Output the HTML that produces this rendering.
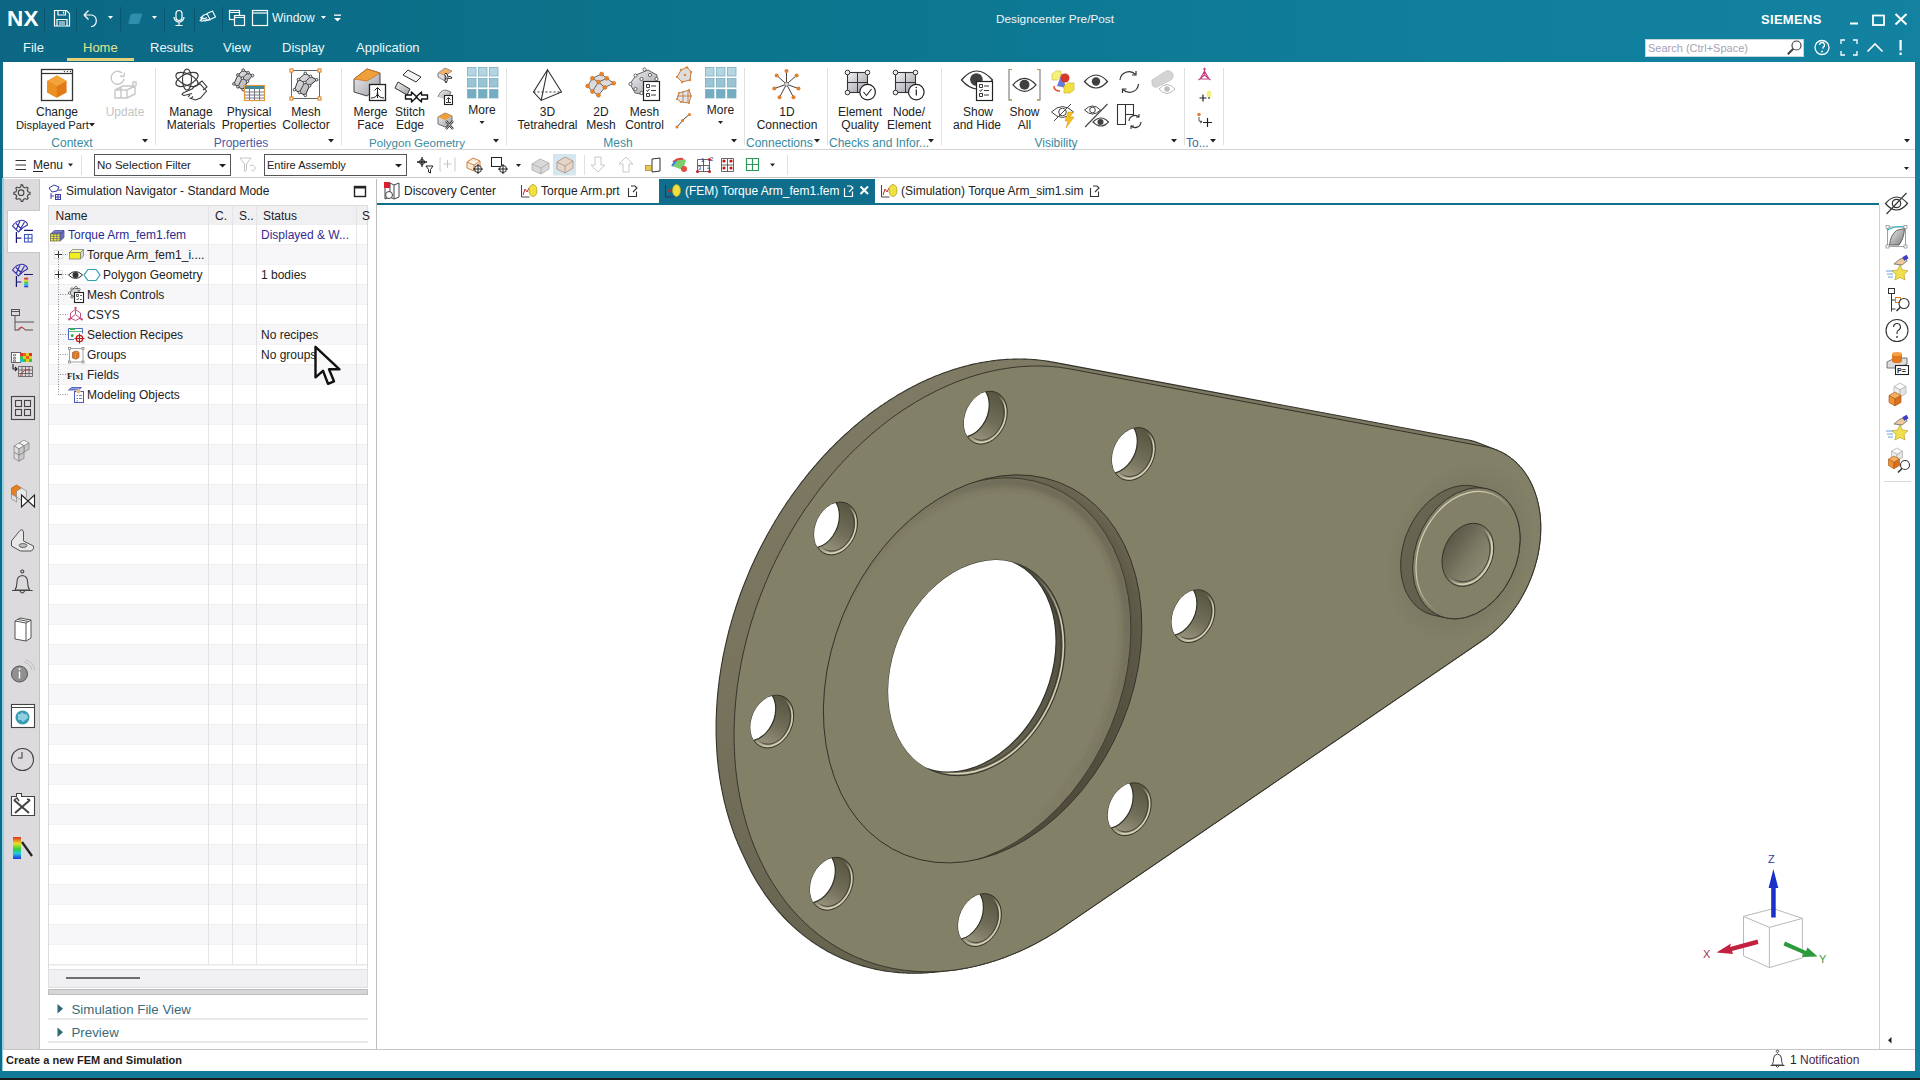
<!DOCTYPE html>
<html><head><meta charset="utf-8">
<style>
*{margin:0;padding:0;box-sizing:border-box}
html,body{width:1920px;height:1080px;overflow:hidden;background:#fff;font-family:"Liberation Sans",sans-serif;position:relative}
.a{position:absolute}
.t{position:absolute;white-space:nowrap;font-size:12px;line-height:14px;color:#222}
.c{text-align:center;transform:translateX(-50%)}
svg{overflow:visible}
</style></head><body>
<!-- title bar -->
<div class="a" style="left:0;top:0;width:1920px;height:62px;background:linear-gradient(90deg,#0c6784 0%,#0b728a 30%,#107f9d 78%,#1282a0 100%)"></div>
<!-- left/right/bottom frame -->
<div class="a" style="left:0;top:62px;width:3px;height:1018px;background:#0e6c8a"></div>
<div class="a" style="left:1915px;top:62px;width:5px;height:1018px;background:#1380a0"></div>
<div class="a" style="left:0;top:1071px;width:1920px;height:7px;background:#11799a"></div>
<div class="a" style="left:0;top:1078px;width:1920px;height:2px;background:#1a1a1a"></div>

<!-- NX logo -->
<div class="t" style="left:7px;top:5.5px;font-size:22.5px;line-height:26px;font-weight:700;color:#fff;letter-spacing:0.3px">NX</div>
<div class="a" style="left:44px;top:7px;width:1px;height:24px;background:#0a5670"></div>
<div class="a" style="left:76px;top:7px;width:1px;height:24px;background:#0a5670"></div>
<div class="a" style="left:120px;top:7px;width:1px;height:24px;background:#0a5670"></div>
<div class="a" style="left:164px;top:7px;width:1px;height:24px;background:#0a5670"></div>
<div class="a" style="left:194px;top:7px;width:1px;height:24px;background:#0a5670"></div>
<div class="a" style="left:222px;top:7px;width:1px;height:24px;background:#0a5670"></div>
<svg class="a" style="left:0;top:0" width="360" height="40">
 <g fill="none" stroke="#fff" stroke-width="1.2">
  <!-- save -->
  <path d="M54.5,10.5 h12 l3,3 v12.5 h-15 z"/>
  <path d="M58,10.5 v4.5 h7.5 v-4.5"/><path d="M63.5,11.5 v2"/>
  <path d="M57,26 v-6.5 h10 v6.5"/><path d="M59,22 h6 M59,24 h6"/>
  <!-- undo -->
  <path d="M84,15 l4.5,-4.5 M84,15 l4.5,4.5 M84,15 h8 a6,6 0 0 1 0,11.5 h-1"/>
  <!-- mic -->
  <rect x="176" y="10.5" width="6" height="10" rx="3"/>
  <path d="M174,17 a5,5 0 0 0 10,0 M179,22 v3 M175.5,25.5 h7"/>
  <!-- window icons -->
  <rect x="229.5" y="10.5" width="10" height="9"/><rect x="234.5" y="15.5" width="10" height="10" fill="#0f7190"/>
  <path d="M229.5,12.5 h10 M234.5,17.5 h10"/>
  <rect x="252.5" y="10.5" width="15" height="15"/><path d="M252.5,13 h15"/>
 </g>
 <!-- hand icon -->
 <g fill="none" stroke="#fff" stroke-width="1.1" stroke-linejoin="round"><path d="M207,13.5 l5.5,-2.5 l3,6 l-5.5,2.5 z"/><path d="M207,14 l-3,1 l-3.5,3 h3 l-3.5,2.5 l2,0.8 l4,-1.5 l4.5,0.2"/><path d="M203,19 l4,-1.2 M204.5,21.3 l4.5,-1.5"/></g>
 <!-- faded shaded icon -->
 <path d="M130.5,15 q1,-1.5 2.5,-1.5 h8 q1.5,0 1,1.5 l-2.5,7.5 q-0.5,1.5 -2,1.5 h-8 q-1.5,0 -1,-1.5 z" fill="#2e8eae"/>
 <g fill="#fff">
  <path d="M108,16 h5 l-2.5,3 z"/><path d="M152,16 h5 l-2.5,3 z"/><path d="M321,16 h5 l-2.5,3 z"/>
  <rect x="334" y="14.5" width="7" height="1.3"/><path d="M334,18 h7 l-3.5,3.5 z"/>
 </g>
</svg>
<div class="t" style="left:272px;top:11px;color:#f2f8fa">Window</div>
<!-- title -->
<div class="t" style="left:996px;top:11.5px;font-size:11.8px;color:#eef6f8">Designcenter Pre/Post</div>
<div class="t" style="left:1761px;top:13px;font-size:13px;font-weight:700;color:#fff;letter-spacing:0.3px">SIEMENS</div>
<svg class="a" style="left:1840px;top:0" width="80" height="62">
 <g fill="none" stroke="#fff" stroke-width="2">
  <path d="M10,23.5 h8"/>
  <rect x="33" y="15.5" width="11" height="9.5" stroke-width="1.8"/>
  <path d="M55.5,14 l11,10.5 M66.5,14 l-11,10.5"/>
 </g>
 <!-- help ? / fullscreen / chevron / ! -->
 <g fill="none" stroke="#fff" stroke-width="1.3">
  <circle cx="-18" cy="47.5" r="7"/>
  <path d="M-20.5,45 a2.5,2.5 0 1 1 3.5,2.3 v1.5"/>
  <path d="M1,44 v-4 h4 M13,40 h4 v4 M17,51 v4 h-4 M5,55 h-4 v-4"/>
  <path d="M27.5,51.5 l7.5,-7.5 l7.5,7.5" stroke-width="1.6"/>
 </g>
 <circle cx="-18" cy="51.5" r="0.9" fill="#fff"/>
 <rect x="59.5" y="40" width="2.2" height="10.5" fill="#fff"/><rect x="59.5" y="52.5" width="2.2" height="2.5" fill="#fff"/>
</svg>
<!-- menu tabs -->
<div class="t" style="left:23px;top:40px;font-size:13px;line-height:16px;color:#eaf6fa">File</div>
<div class="t" style="left:83px;top:40px;font-size:13px;line-height:16px;color:#e2e48a">Home</div>
<div class="a" style="left:67px;top:58px;width:67px;height:2.5px;background:#e6d27c"></div>
<div class="t" style="left:150px;top:40px;font-size:13px;line-height:16px;color:#eaf6fa">Results</div>
<div class="t" style="left:223px;top:40px;font-size:13px;line-height:16px;color:#eaf6fa">View</div>
<div class="t" style="left:282px;top:40px;font-size:13px;line-height:16px;color:#eaf6fa">Display</div>
<div class="t" style="left:356px;top:40px;font-size:13px;line-height:16px;color:#eaf6fa">Application</div>
<!-- search -->
<div class="a" style="left:1645px;top:39px;width:159px;height:18px;background:#fff;border:1px solid #c9d6dc"></div>
<div class="t" style="left:1648px;top:41px;font-size:11px;color:#a8a2b4">Search (Ctrl+Space)</div>
<svg class="a" style="left:1780px;top:36px" width="26" height="24"><g fill="none" stroke="#444" stroke-width="1.2"><circle cx="16.5" cy="9.5" r="4.5"/><path d="M13.3,12.7 l-5.5,5.5" stroke-width="2"/></g></svg>

<!-- ribbon -->
<div class="a" style="left:3px;top:62px;width:1912px;height:88px;background:#fff;border-bottom:1px solid #d4d4d4"></div>
<!-- ribbon labels -->
<div class="t c" style="left:57px;top:105px">Change</div>
<div class="t" style="left:16px;top:118px;font-size:11.2px">Displayed Part</div>
<div class="t c" style="left:125px;top:105px;color:#c4c4c4">Update</div>
<div class="t c" style="left:191px;top:105px">Manage</div>
<div class="t c" style="left:191px;top:118px">Materials</div>
<div class="t c" style="left:249px;top:105px">Physical</div>
<div class="t c" style="left:249px;top:118px">Properties</div>
<div class="t c" style="left:306px;top:105px">Mesh</div>
<div class="t c" style="left:306px;top:118px">Collector</div>
<div class="t c" style="left:370.5px;top:105px">Merge</div>
<div class="t c" style="left:370.5px;top:118px">Face</div>
<div class="t c" style="left:410px;top:105px">Stitch</div>
<div class="t c" style="left:410px;top:118px">Edge</div>
<div class="t c" style="left:482px;top:103px">More</div>
<div class="t c" style="left:547.5px;top:105px">3D</div>
<div class="t c" style="left:547.5px;top:118px">Tetrahedral</div>
<div class="t c" style="left:601px;top:105px">2D</div>
<div class="t c" style="left:601px;top:118px">Mesh</div>
<div class="t c" style="left:644.5px;top:105px">Mesh</div>
<div class="t c" style="left:644.5px;top:118px">Control</div>
<div class="t c" style="left:720.5px;top:103px">More</div>
<div class="t c" style="left:787px;top:105px">1D</div>
<div class="t c" style="left:787px;top:118px">Connection</div>
<div class="t c" style="left:860px;top:105px">Element</div>
<div class="t c" style="left:860px;top:118px">Quality</div>
<div class="t c" style="left:909px;top:105px">Node/</div>
<div class="t c" style="left:909px;top:118px">Element</div>
<div class="t c" style="left:978px;top:105px">Show</div>
<div class="t c" style="left:977px;top:118px">and Hide</div>
<div class="t c" style="left:1024.5px;top:105px">Show</div>
<div class="t c" style="left:1024.5px;top:118px">All</div>
<!-- group labels -->
<div class="t c" style="left:72px;top:136px;color:#3a8aa0">Context</div>
<div class="t c" style="left:241px;top:136px;color:#4a5ca8">Properties</div>
<div class="t c" style="left:417px;top:136px;color:#3a8aa0;font-size:11.6px">Polygon Geometry</div>
<div class="t c" style="left:618px;top:136px;color:#3a8aa0">Mesh</div>
<div class="t" style="left:746px;top:136px;color:#3a8aa0">Connections</div>
<div class="t" style="left:829px;top:136px;color:#3a8aa0">Checks and Infor...</div>
<div class="t c" style="left:1056px;top:136px;color:#3a8aa0">Visibility</div>
<div class="t" style="left:1186px;top:136px;color:#3a6aa8">To...</div>
<!-- separators -->
<div class="a" style="left:155px;top:68px;width:1px;height:77px;background:#e0e0e0"></div>
<div class="a" style="left:341px;top:68px;width:1px;height:77px;background:#e0e0e0"></div>
<div class="a" style="left:506px;top:68px;width:1px;height:77px;background:#e0e0e0"></div>
<div class="a" style="left:744px;top:68px;width:1px;height:77px;background:#e0e0e0"></div>
<div class="a" style="left:827px;top:68px;width:1px;height:77px;background:#e0e0e0"></div>
<div class="a" style="left:941px;top:68px;width:1px;height:77px;background:#e0e0e0"></div>
<div class="a" style="left:1184px;top:68px;width:1px;height:77px;background:#e0e0e0"></div>
<div class="a" style="left:1223px;top:68px;width:1px;height:77px;background:#e0e0e0"></div>
<!-- dropdown triangles -->
<svg class="a" style="left:0;top:0" width="1920" height="150"><g fill="#222">
 <path d="M89,123 h6 l-3,3.5 z"/>
 <path d="M142,139 h6 l-3,3.5 z"/><path d="M328,139 h6 l-3,3.5 z"/><path d="M493,139 h6 l-3,3.5 z"/>
 <path d="M479.5,121 h5 l-2.5,3 z"/><path d="M718,121 h5 l-2.5,3 z"/>
 <path d="M731,139 h6 l-3,3.5 z"/><path d="M814,139 h6 l-3,3.5 z"/><path d="M928,139 h6 l-3,3.5 z"/>
 <path d="M1171,139 h6 l-3,3.5 z"/><path d="M1210,139 h6 l-3,3.5 z"/><path d="M1904,139 h6 l-3,3.5 z"/>
</g></svg>
<svg class="a" style="left:0;top:0" width="1920" height="150">
<defs>
 <linearGradient id="gOr" x1="0" y1="0" x2="1" y2="1"><stop offset="0" stop-color="#f6a93a"/><stop offset="1" stop-color="#d86a12"/></linearGradient>
 <linearGradient id="gGr" x1="0" y1="0" x2="1" y2="1"><stop offset="0" stop-color="#f2f2f4"/><stop offset="1" stop-color="#9c9ca4"/></linearGradient>
</defs>
<!-- Change displayed part -->
<rect x="41.5" y="69.5" width="31" height="31" fill="#fff" stroke="#333" stroke-width="1.3"/>
<path d="M41.5,73.5 h31" stroke="#333" stroke-width="1.2"/>
<circle cx="64.4" cy="71.6" r="0.7" fill="#333"/><circle cx="67.4" cy="71.6" r="0.7" fill="#333"/><circle cx="70.4" cy="71.6" r="0.7" fill="#333"/>
<path d="M56.9,75.6 L66.6,80.9 L66.6,92.4 L56.9,97.75 L47.25,92.4 L47.25,80.9 Z" fill="#e07a18"/>
<path d="M56.9,75.6 L66.6,80.9 L56.9,86.2 L47.25,80.9 Z" fill="#f4a43a"/>
<path d="M47.25,80.9 L56.9,86.2 L56.9,97.75 L47.25,92.4 Z" fill="#ec901f"/>
<!-- Update (gray) -->
<g fill="none" stroke="#c8c8c8" stroke-width="1.4">
 <path d="M122,73 a6.5,6.5 0 1 0 2,6"/><path d="M120,76 l4,0.5 l0.5,-4" />
 <path d="M115,90 l8,-4 h12 l-8,4 z M115,90 v8 h12 v-8 M127,98 l8,-4 v-8 M121,86 v12"/>
 <path d="M133,86 v-4 h3 v4"/>
</g>
<!-- Manage materials -->
<g fill="none" stroke="#3a3a3a" stroke-width="1.1">
 <ellipse cx="187" cy="79.5" rx="12" ry="5.5" transform="rotate(25 187 79.5)"/>
 <ellipse cx="187" cy="79.5" rx="12" ry="5.5" transform="rotate(-25 187 79.5)"/>
 <ellipse cx="187" cy="79.5" rx="4.5" ry="10.5"/>
 <path d="M183,93 l9,-4 l3,-3 l5,-2 l6.5,7 l-6,7 l-5,2 l-6,-2 M183,93 l-1,1.5 l2,1 l8,-2 M190,95 l-2,1.8 M193,96.5 l-2,2"/>
 <path d="M198,84 l4,-3 l5,6 l-4,3"/>
</g>
<!-- Physical properties -->
<path d="M243.2,70.2 L248.1,72.8 L252.5,75.5 L247.6,81.3 L243.2,89.7 L237.9,86.8 L233.9,83.9 L237.9,75Z" fill="url(#gGr)" stroke="#333" stroke-width="1"/><path d="M237.9,75 L242.3,78.2 L247.6,81.3 M248.1,72.8 L242.3,78.2 L237.9,86.8" fill="none" stroke="#333" stroke-width="0.9"/><g fill="#f4f4f4" stroke="#333" stroke-width="0.9"><circle cx="243.2" cy="70.2" r="1.3"/><circle cx="248.1" cy="72.8" r="1.3"/><circle cx="252.5" cy="75.5" r="1.3"/><circle cx="237.9" cy="75" r="1.3"/><circle cx="242.3" cy="78.2" r="1.3"/><circle cx="247.6" cy="81.3" r="1.3"/><circle cx="233.9" cy="83.9" r="1.3"/><circle cx="237.9" cy="86.8" r="1.3"/><circle cx="243.2" cy="89.7" r="1.3"/></g>
<rect x="244.5" y="85.5" width="20" height="15" fill="#fff" stroke="#e0963c" stroke-width="1.2"/>
<rect x="245" y="86" width="19" height="3" fill="#3c8a9a"/>
<path d="M245,92 h19 M245,95 h19 M245,98 h19 M249.5,89 v11 M254.5,89 v11 M259.5,89 v11" stroke="#6a6a7a" stroke-width="0.9"/>
<!-- Mesh collector -->
<rect x="291.5" y="70.5" width="28" height="28" fill="none" stroke="#666" stroke-width="1"/>
<g fill="#fff" stroke="#e08a30" stroke-width="1.2"><rect x="290" y="69" width="3" height="3"/><rect x="318" y="69" width="3" height="3"/><rect x="290" y="97" width="3" height="3"/><rect x="318" y="97" width="3" height="3"/></g>
<path d="M305.3,73.3 L310.5,76.4 L316.7,79.8 L309.6,85.7 L305.3,95.4 L299.4,92.5 L294.5,89.7 L298.5,79.5Z" fill="url(#gGr)" stroke="#333" stroke-width="1"/><path d="M298.5,79.5 L304.7,82.6 L309.6,85.7 M310.5,76.4 L304.7,82.6 L299.4,92.5" fill="none" stroke="#333" stroke-width="0.9"/><g fill="#f4f4f4" stroke="#333" stroke-width="0.9"><circle cx="305.3" cy="73.3" r="1.3"/><circle cx="310.5" cy="76.4" r="1.3"/><circle cx="316.7" cy="79.8" r="1.3"/><circle cx="298.5" cy="79.5" r="1.3"/><circle cx="304.7" cy="82.6" r="1.3"/><circle cx="309.6" cy="85.7" r="1.3"/><circle cx="294.5" cy="89.7" r="1.3"/><circle cx="299.4" cy="92.5" r="1.3"/><circle cx="305.3" cy="95.4" r="1.3"/></g>
<!-- Merge face -->
<path d="M354,79 l13,-10 l13,4 v13 l-13,10 l-13,-4 z" fill="url(#gGr)" stroke="#444" stroke-width="1"/>
<path d="M354,79 l13,-10 l13,4 l-13,8 z" fill="#f0a03a" stroke="#c77020" stroke-width="0.8"/>
<rect x="369.5" y="84.5" width="16" height="16" fill="#fff" stroke="#222" stroke-width="1.3"/>
<path d="M377.5,98 v-10 M374.5,90.5 l3,-3 l3,3 M371,98 q6.5,0 6.5,-6 q0,6 6.5,6" fill="none" stroke="#222" stroke-width="1"/>
<!-- Stitch edge -->
<path d="M403,75 l5,-5 l13,7 l-5,5 z" fill="#f2f2f4" stroke="#333" stroke-width="1"/>
<path d="M395,88 l3,-6 l12,7 l-3,6 z" fill="url(#gGr)" stroke="#333" stroke-width="1"/>
<path d="M405.5,95 h6 v-3 l5.5,5 l-5.5,5 v-3 h-6 z M427.5,95 h-6 v-3 l-5.5,5 l5.5,5 v-3 h6 z" fill="#fff" stroke="#111" stroke-width="1.4" stroke-linejoin="round"/>
<!-- small poly icons -->
<path d="M438,73 l7,-5 l7,3 l-7,5 z" fill="#f2b06a" stroke="#888" stroke-width="0.8"/>
<path d="M438,73 v4 l7,4 v-5" fill="#ddd" stroke="#666" stroke-width="0.8"/>
<path d="M446,77 q-3,-3 0,-4 q2,2 2,4 q3,-2 4,1 q-3,1 -5,0 q1,3 -1,5 q-2,-2 0,-6" fill="#fff" stroke="#222" stroke-width="1"/>
<path d="M438,97 q2,-7 8,-7 l5,2 l-3,8" fill="url(#gGr)" stroke="#666" stroke-width="0.8"/>
<rect x="444.5" y="95.5" width="8" height="9" fill="#fff" stroke="#222" stroke-width="1.1"/>
<path d="M448.5,102 v-4 M446.5,99.5 l2,-2 l2,2 M446,102.5 h5" fill="none" stroke="#222" stroke-width="0.9"/>
<path d="M438,117 l7,-4 l7,3 v7 l-7,4 l-7,-3 z" fill="url(#gGr)" stroke="#555" stroke-width="0.8"/>
<path d="M438,117 l7,-4 l7,3 l-7,4 z" fill="#f0a03a"/>
<path d="M446,121 l7,8 M453,121 l-7,8" stroke="#222" stroke-width="2.2"/><path d="M446,121 l7,8 M453,121 l-7,8" stroke="#fff" stroke-width="0.8"/>
<!-- More grid 1 -->
<g stroke="#7aaec0" stroke-width="0.8">
 <rect x="467.5" y="67.5" width="8.5" height="8.5" fill="#b4d6e2"/><rect x="478.5" y="67.5" width="8.5" height="8.5" fill="#b4d6e2"/><rect x="489.5" y="67.5" width="8.5" height="8.5" fill="#b4d6e2"/>
 <rect x="467.5" y="78.5" width="8.5" height="8.5" fill="#98c4d4"/><rect x="478.5" y="78.5" width="8.5" height="8.5" fill="#98c4d4"/><rect x="489.5" y="78.5" width="8.5" height="8.5" fill="#98c4d4"/>
 <rect x="467.5" y="89.5" width="8.5" height="8.5" fill="#74acc2"/><rect x="478.5" y="89.5" width="8.5" height="8.5" fill="#74acc2"/><rect x="489.5" y="89.5" width="8.5" height="8.5" fill="#74acc2"/>
</g>
<!-- 3D tet -->
<g fill="none" stroke="#333" stroke-width="1.1">
 <path d="M547.5,69.7 L533.5,92 L541.2,100.4 L561.5,92 Z M547.5,69.7 L541.2,100.4"/>
 <path d="M533.5,92 H561.5" stroke-dasharray="2,2"/>
</g>
<!-- 2D mesh -->
<path d="M592.4,78.3 L601.6,74 L606.8,78.3 L613.7,83.2 L604.8,87.5 L598.5,95.2 L592.4,91.5 L587.6,86 Z" fill="#dcdce0" stroke="#555" stroke-width="0.9"/>
<path d="M592.4,78.3 L598.5,82.1 L604.8,87.5 M606.8,78.3 L598.5,82.1 L592.4,91.5" fill="none" stroke="#555" stroke-width="0.9"/>
<g fill="#e8832a" stroke="#c76a1a" stroke-width="0.5"><circle cx="601.6" cy="74" r="2"/><circle cx="592.4" cy="78.3" r="2"/><circle cx="606.8" cy="78.3" r="2"/><circle cx="598.5" cy="82.1" r="2"/><circle cx="613.7" cy="83.2" r="2"/><circle cx="587.6" cy="86" r="2"/><circle cx="604.8" cy="87.5" r="2"/><circle cx="592.4" cy="91.5" r="2"/><circle cx="598.5" cy="95.2" r="2"/></g>
<!-- Mesh control -->
<path d="M630,84 l6,-9 l12,-5 l9,5 v12 l-10,8 l-12,-2 z" fill="url(#gGr)" stroke="#555" stroke-width="0.9"/>
<g fill="#fff" stroke="#555" stroke-width="0.9"><circle cx="644.5" cy="69.5" r="1.6"/><circle cx="635.5" cy="75.5" r="1.6"/><circle cx="650" cy="75" r="1.6"/><circle cx="630.5" cy="84" r="1.6"/><circle cx="641.5" cy="79" r="1.6"/><circle cx="635.5" cy="89" r="1.6"/><circle cx="641.5" cy="93" r="1.6"/><circle cx="656.5" cy="79" r="1.6"/></g>
<rect x="643.5" y="81.5" width="16" height="19" fill="#fff" stroke="#222" stroke-width="1.2"/>
<path d="M646.5,84.5 h3 v3 h-3 z M646.5,93.5 h3 v3 h-3 z M651,86 h5 M651,90.5 h5 M651,95 h5 M646.5,90 l1,1.5 l2,-2.5" fill="none" stroke="#222" stroke-width="0.9"/>
<!-- small mesh icons -->
<path d="M677,77 l4,-7 l6,-3 l4,5 l-1,8 l-8,2 z" fill="#ddd" stroke="#b06020" stroke-width="0.8"/>
<g fill="#e8832a"><circle cx="681" cy="70" r="1.2"/><circle cx="687" cy="67.5" r="1.2"/><circle cx="691" cy="72" r="1.2"/><circle cx="690" cy="80" r="1.2"/><circle cx="682" cy="82" r="1.2"/><circle cx="677" cy="77" r="1.2"/><circle cx="685" cy="75" r="1.2"/></g>
<path d="M677,99 l2,-6 l10,-3 l2,6 l-2,7 l-8,-1 z" fill="#e4e4e8" stroke="#b06020" stroke-width="0.8"/>
<path d="M683,91 v11 M688,91 v11 M677,96 h14" stroke="#b06020" stroke-width="0.7"/>
<g fill="#e8832a"><circle cx="677" cy="99" r="1.1"/><circle cx="679" cy="93" r="1.1"/><circle cx="689" cy="90" r="1.1"/><circle cx="691" cy="96" r="1.1"/><circle cx="689" cy="103" r="1.1"/><circle cx="681" cy="102" r="1.1"/></g>
<path d="M677,127 l7,-8 l6,-5" fill="none" stroke="#444" stroke-width="1"/>
<g fill="#e8832a"><circle cx="677" cy="127" r="1.6"/><circle cx="682.5" cy="120.5" r="1.6"/><circle cx="689.5" cy="114.5" r="1.6"/></g>
<!-- More grid 2 -->
<g stroke="#7aaec0" stroke-width="0.8">
 <rect x="705.5" y="67.5" width="8.5" height="8.5" fill="#b4d6e2"/><rect x="716.5" y="67.5" width="8.5" height="8.5" fill="#b4d6e2"/><rect x="727.5" y="67.5" width="8.5" height="8.5" fill="#b4d6e2"/>
 <rect x="705.5" y="78.5" width="8.5" height="8.5" fill="#98c4d4"/><rect x="716.5" y="78.5" width="8.5" height="8.5" fill="#98c4d4"/><rect x="727.5" y="78.5" width="8.5" height="8.5" fill="#98c4d4"/>
 <rect x="705.5" y="89.5" width="8.5" height="8.5" fill="#74acc2"/><rect x="716.5" y="89.5" width="8.5" height="8.5" fill="#74acc2"/><rect x="727.5" y="89.5" width="8.5" height="8.5" fill="#74acc2"/>
</g>
<!-- 1D connection -->
<g stroke="#444" stroke-width="1"><path d="M786.5,84.2 L786.5,71 M786.5,84.2 L776.7,75.4 M786.5,84.2 L796.6,75.4 M786.5,84.2 L774.3,88.6 M786.5,84.2 L798.5,88.6 M786.5,84.2 L779.5,97.3 M786.5,84.2 L793.5,97.3"/></g>
<circle cx="786.5" cy="84.2" r="2" fill="#ddd" stroke="#666" stroke-width="0.7"/>
<g fill="#e0802a"><circle cx="786.5" cy="71" r="2"/><circle cx="776.7" cy="75.4" r="2"/><circle cx="796.6" cy="75.4" r="2"/><circle cx="774.3" cy="88.6" r="2"/><circle cx="798.5" cy="88.6" r="2"/><circle cx="779.5" cy="97.3" r="2"/><circle cx="793.5" cy="97.3" r="2"/></g>
<!-- Element quality -->
<rect x="847.5" y="72.5" width="20" height="20" fill="url(#gGr)" stroke="#333" stroke-width="1.1"/>
<path d="M857.5,72.5 v20 M847.5,82.5 h20" stroke="#333" stroke-width="1"/>
<g fill="#eee" stroke="#333" stroke-width="1"><circle cx="847.5" cy="72.5" r="2.3"/><circle cx="867.5" cy="72.5" r="2.3"/><circle cx="847.5" cy="92.5" r="2.3"/></g>
<circle cx="867.6" cy="92.1" r="7.8" fill="#fff" stroke="#222" stroke-width="1.2"/>
<path d="M863.5,92 l3,3.5 l5,-6.5" fill="none" stroke="#222" stroke-width="1.1"/>
<!-- Node/element -->
<rect x="895.5" y="72.5" width="20" height="20" fill="url(#gGr)" stroke="#333" stroke-width="1.1"/>
<path d="M905.5,72.5 v20 M895.5,82.5 h20" stroke="#333" stroke-width="1"/>
<g fill="#eee" stroke="#333" stroke-width="1"><circle cx="895.5" cy="72.5" r="2.3"/><circle cx="915.5" cy="72.5" r="2.3"/><circle cx="895.5" cy="92.5" r="2.3"/></g>
<circle cx="916.3" cy="92.1" r="7.8" fill="#fff" stroke="#222" stroke-width="1.2"/>
<path d="M916.3,89.5 v6" stroke="#222" stroke-width="1.2"/><circle cx="916.3" cy="87.5" r="0.8" fill="#222"/>
<!-- Show and hide -->
<path d="M961.5,80 q15,-18 31,0 q-15,18 -31,0 z" fill="none" stroke="#333" stroke-width="1.2"/>
<circle cx="976.4" cy="79.5" r="6.3" fill="#404040"/>
<rect x="976.5" y="81.5" width="16" height="19" fill="#fff" stroke="#222" stroke-width="1.2"/>
<path d="M979.5,84.5 h3 v3 h-3 z M979.5,93.5 h3 v3 h-3 z M984,86 h5 M984,90.5 h5 M984,95 h5 M979.5,90 l1,1.5 l2,-2.5" fill="none" stroke="#222" stroke-width="0.9"/>
<!-- Show all -->
<path d="M1012,69.5 h-3 v30.5 h3 M1037,69.5 h3 v30.5 h-3" fill="none" stroke="#777" stroke-width="1.1"/>
<path d="M1009,69.5 h3 M1009,100 h3 M1037,69.5 h3 M1037,100 h3" stroke="#c89440" stroke-width="1.1"/>
<path d="M1013,84.8 q11.5,-13 23,0 q-11.5,13 -23,0 z" fill="none" stroke="#333" stroke-width="1.2"/>
<circle cx="1024.5" cy="84.8" r="5" fill="#404040"/>
<!-- colorful -->
<path d="M1052,74 l4,-3 h5 v6 l-4,3 h-5 z" fill="#f4f07a" stroke="#c8c040" stroke-width="0.6"/>
<path d="M1062,73 l-5,13 l9,2 z" fill="#6a7ad8"/><circle cx="1065" cy="78" r="4.5" fill="#d83828"/>
<path d="M1064,86 l4,-3 h6 v7 l-4,3 h-6 z" fill="#f4e040" stroke="#c8b020" stroke-width="0.6"/>
<path d="M1054,86 q0,5 6,5" fill="none" stroke="#e0502a" stroke-width="1.5"/>
<!-- eye -->
<path d="M1084.5,81.5 q11.5,-13 23,0 q-11.5,13 -23,0 z" fill="none" stroke="#333" stroke-width="1.2"/>
<circle cx="1096" cy="81.5" r="4.2" fill="#404040"/>
<!-- refresh -->
<g fill="none" stroke="#333" stroke-width="1.2"><path d="M1120,80 a9,9 0 0 1 15.5,-5.5 M1138.5,84 a9,9 0 0 1 -15.5,5.5"/><path d="M1136,71 v4 h-4 M1122.5,93 v-4 h4"/></g>
<!-- faded flashlight -->
<path d="M1152,80 l14,-9 q5,-1 7,3 q1,4 -2,6 l-14,7 q-4,1 -5,-3 z" fill="#d4d4d4" stroke="#c4c4c4" stroke-width="0.8"/>
<path d="M1159,89 q8,-9 16,0 q-8,9 -16,0 z" fill="#fff" stroke="#bcbcbc" stroke-width="1"/><circle cx="1167" cy="89" r="2.8" fill="#bdbdbd"/>
<!-- eye slash lightning -->
<path d="M1051.5,112 q11,-11 22,0 q-11,11 -22,0 z" fill="none" stroke="#444" stroke-width="1"/>
<circle cx="1062.5" cy="112" r="3.8" fill="none" stroke="#444" stroke-width="1"/>
<path d="M1054,121 l17,-17" stroke="#444" stroke-width="1"/>
<path d="M1068,112 l5,0 l-3,5 l4,0 l-8,11 l2,-7 l-3,0 z" fill="#f4c020" stroke="#d09010" stroke-width="0.5"/>
<!-- eye slash + eye -->
<path d="M1084.5,110 q8,-8 16,0 q-8,8 -16,0 z" fill="none" stroke="#444" stroke-width="1"/>
<circle cx="1092.5" cy="110" r="2.8" fill="none" stroke="#444" stroke-width="1"/>
<path d="M1085,127 l22.5,-23" stroke="#444" stroke-width="1.1"/>
<path d="M1093,122 q8,-8 15.5,0 q-7.5,8 -15.5,0 z" fill="none" stroke="#444" stroke-width="1.1"/><circle cx="1100.5" cy="122" r="3" fill="#404040"/>
<!-- panels refresh -->
<path d="M1117.5,104.5 h16 v10 h-8 v10 h-8 z M1125.5,104.5 v10 M1125.5,114.5 h8" fill="none" stroke="#333" stroke-width="1.1"/>
<g fill="none" stroke="#333" stroke-width="1.1"><path d="M1129,121 a6,6 0 0 1 10,-4 M1141,122 a6,6 0 0 1 -10,4"/><path d="M1139,114 v3 h-3 M1131,129 v-3 h3"/></g>
<!-- To... icons -->
<g fill="none" stroke="#c04080" stroke-width="1.1"><path d="M1204.5,68 v7 M1204.5,75 l-6,5 M1204.5,75 l6,5 M1200,79 l4.5,-8 l4.5,8 z"/></g>
<path d="M1202.5,69.5 l2,-2 l2,2 z" fill="#c04080"/>
<path d="M1199.5,98 h7 M1203,94.5 v7" stroke="#222" stroke-width="1.2"/>
<ellipse cx="1209" cy="94" rx="2.5" ry="3.5" fill="#f4f080"/><rect x="1208" y="97" width="2" height="2" fill="#888"/>
<circle cx="1199" cy="114.5" r="1.8" fill="#e0803a"/>
<path d="M1199,117 v4 l3,1 M1201,120.5 l1,1.5 l-2,1" fill="none" stroke="#444" stroke-width="0.9"/>
<path d="M1203,122.5 h9 M1207.5,118 v9" stroke="#222" stroke-width="1.2"/>
</svg>


<!-- toolbar 2 -->
<div class="a" style="left:3px;top:151px;width:1912px;height:27px;background:#fff;border-bottom:1px solid #c8c8c8"></div>
<svg class="a" style="left:0;top:150px" width="1920" height="30">
 <g transform="translate(0,-150)">
 <path d="M15.5,160.5 h10.5 M15.5,165 h10.5 M15.5,169.5 h10.5" stroke="#333" stroke-width="1.1"/>
 <path d="M68,163.5 h5 l-2.5,3 z" fill="#222"/>
 <rect x="81" y="155" width="1" height="20" fill="#e0e0e0"/>
 <rect x="94.5" y="154.5" width="136" height="21" fill="#fff" stroke="#555" stroke-width="1"/>
 <path d="M219,164 h7 l-3.5,3.5 z" fill="#222"/>
 <!-- faded filter -->
 <path d="M240,158 h11 l-4.5,6 v6 l-2,1.5 v-7.5 z" fill="none" stroke="#c4c4c4" stroke-width="1"/>
 <path d="M250,166 a3,3 0 1 1 3,5 l-1.5,-1" fill="none" stroke="#c4c4c4" stroke-width="1"/>
 <rect x="264.5" y="154.5" width="142" height="21" fill="#fff" stroke="#555" stroke-width="1"/>
 <path d="M395,164 h7 l-3.5,3.5 z" fill="#222"/>
 <!-- icons -->
 <path d="M422,157 v10 M417,162 h10" stroke="#222" stroke-width="1.3"/><circle cx="422" cy="162" r="2.5" fill="none" stroke="#222" stroke-width="1"/>
 <path d="M426,166 h7 l-2.5,3.5 v3.5 l-2,-1 v-2.5 z" fill="#fff" stroke="#222" stroke-width="1"/>
 <path d="M441,158 h-1 v13 h1 M454,158 h1 v13 h-1" fill="none" stroke="#ccc" stroke-width="1"/><path d="M447.5,160 v8 M443.5,164 h8" stroke="#c4c4c4" stroke-width="1"/>
 <path d="M467,162 l6,-4 l7,3 v6 l-6,4 l-7,-3 z M467,162 l7,3 l6,-4 M474,165 v6" fill="#fbe8d0" stroke="#d08040" stroke-width="1"/>
 <circle cx="478" cy="169" r="3.5" fill="#fff" stroke="#222" stroke-width="1"/><path d="M478,164 v10 M473,169 h10" stroke="#222" stroke-width="1"/>
 <rect x="491.5" y="157.5" width="10" height="9" fill="#fff" stroke="#222" stroke-width="1"/>
 <circle cx="503" cy="169" r="3.5" fill="#fff" stroke="#222" stroke-width="1"/><path d="M503,164 v10 M498,169 h10" stroke="#222" stroke-width="1"/>
 <path d="M516,164 h5 l-2.5,3 z" fill="#222"/>
 <path d="M532,164 l8,-5 l9,4 v6 l-8,5 l-9,-4 z" fill="#d8d8d8" stroke="#aaa" stroke-width="0.8"/><path d="M532,164 l9,4 l8,-5 M541,168 v6" fill="none" stroke="#aaa" stroke-width="0.8"/>
 <rect x="553" y="154" width="23" height="21.5" fill="#d6e6ee"/>
 <path d="M557,162 l8,-5 l8,4 v7 l-8,5 l-8,-4 z" fill="#e6d6ca" stroke="#a89080" stroke-width="0.8"/><path d="M557,162 l8,4 l8,-5 M565,166 v7" fill="none" stroke="#a89080" stroke-width="0.8"/>
 <rect x="584" y="155" width="1" height="20" fill="#e0e0e0"/>
 <path d="M601,157 v8 h4 l-7,7 l-7,-7 h4 v-8 z" fill="#fff" stroke="#c8c8c8" stroke-width="1"/>
 <path d="M629,172 v-8 h4 l-7,-7 l-7,7 h4 v8 z" fill="#fff" stroke="#c8c8c8" stroke-width="1"/>
 <path d="M652,159 l8,-1 v13 l-8,1 z" fill="#fff" stroke="#333" stroke-width="1"/><rect x="645.5" y="165.5" width="6" height="5" fill="#e8c850" stroke="#a08020" stroke-width="0.7"/>
 <path d="M672,166 q6,-10 14,-6 l-3,10 z" fill="#7ad070"/><path d="M673,162 q5,-4 10,-3" stroke="#e04040" stroke-width="2" fill="none"/><path d="M672,166 q2,-3 4,-5" stroke="#4080e0" stroke-width="2" fill="none"/><circle cx="684" cy="169" r="3" fill="#e05040"/>
 <path d="M697.5,159.5 h12 v12 h-12 z M703.5,159.5 v12 M697.5,165.5 h12" fill="none" stroke="#555" stroke-width="0.9"/>
 <g fill="#c02020"><circle cx="697.5" cy="171.5" r="1.5"/><circle cx="709.5" cy="159.5" r="1.5"/><circle cx="709.5" cy="171.5" r="1.5"/></g>
 <g font-family="Liberation Sans" font-size="6" fill="#2040a0"><text x="701" y="162">1</text><text x="710" y="161">2</text><text x="698" y="170">3</text><text x="707" y="170">4</text></g>
 <path d="M721.5,158.5 h12 v13 h-12 z M727.5,158.5 v13 M721.5,165 h12" fill="none" stroke="#555" stroke-width="0.9"/>
 <g fill="#c01818"><circle cx="724" cy="161" r="1.6"/><circle cx="731" cy="161" r="1.6"/><circle cx="724" cy="168" r="1.6"/><circle cx="731" cy="168" r="1.6"/></g>
 <path d="M746.5,158.5 h12 v12 h-12 z M752.5,158.5 v12 M746.5,164.5 h12" fill="none" stroke="#2a9a5a" stroke-width="1.2"/>
 <path d="M770,163.5 h5 l-2.5,3 z" fill="#222"/>
 <rect x="787" y="155" width="1" height="20" fill="#e0e0e0"/>
 <path d="M1904,167 h5 l-2.5,3 z" fill="#222"/>
 </g>
</svg>
<div class="t" style="left:33px;top:158px;font-size:12px">Menu</div>
<div class="a" style="left:33px;top:171px;width:10px;height:1px;background:#222"></div>
<div class="t" style="left:97px;top:158px;font-size:11.5px">No Selection Filter</div>
<div class="t" style="left:267px;top:158px;font-size:11px">Entire Assembly</div>

<!-- left strip -->
<div class="a" style="left:3px;top:179px;width:37px;height:871px;background:#dcdadc;border-right:1px solid #c4c4c4"></div>
<div class="a" style="left:2px;top:178px;width:1.5px;height:893px;background:#8fd4e6"></div>
<div class="a" style="left:7px;top:210px;width:33px;height:43px;background:#fff;border:1px solid #c8c8c8;border-right:none"></div>
<svg class="a" style="left:0;top:0" width="48" height="1050">
 <!-- gear -->
 <g fill="none" stroke="#444" stroke-width="1.1">
  <path d="M21.1,184.9 l1.6,0.2 l0.6,2 l1.7,0.9 l1.9,-0.9 l1.2,1.1 l-0.9,1.9 l0.8,1.7 l2,0.6 l0.1,1.6 l-2,0.7 l-0.8,1.7 l0.9,1.9 l-1.2,1.1 l-1.9,-0.9 l-1.7,0.9 l-0.6,2 h-1.6 l-0.6,-2 l-1.7,-0.9 l-1.9,0.9 l-1.2,-1.1 l0.9,-1.9 l-0.8,-1.7 l-2,-0.7 v-1.6 l2,-0.6 l0.8,-1.7 l-0.9,-1.9 l1.2,-1.1 l1.9,0.9 l1.7,-0.9 l0.6,-2 z"/>
  <circle cx="21.1" cy="192.7" r="2.8"/>
 </g>
 <!-- sim nav icon -->
 <g fill="none" stroke="#3030b0" stroke-width="1.1">
  <path d="M12.5,226 q5,-7 11,-5.5 q4,1.5 4,4.5 q-5,2 -9,7 z M16,223.5 l6,6 M20,221 l-4,9 M24.5,222 l-5,8.5"/>
 </g>
 <path d="M16.4,232 v11 M16.4,238.2 h5 M24,230.4 h9" stroke="#181870" stroke-width="1.2"/>
 <rect x="24.5" y="234.5" width="7.5" height="7.5" fill="none" stroke="#3a58c0" stroke-width="1.1"/><path d="M28.2,234.5 v7.5 M24.5,238.2 h7.5" stroke="#3a58c0" stroke-width="1"/>
 <!-- results nav icon -->
 <g fill="none" stroke="#3030b0" stroke-width="1.1">
  <path d="M12.5,270 q5,-7 11,-5.5 q4,1.5 4,4.5 q-5,2 -9,7 z M16,267.5 l6,6 M20,265 l-4,9 M24.5,266 l-5,8.5"/>
 </g>
 <path d="M16.4,276 v11 M16.4,282 h5 M24,274.5 h9" stroke="#181870" stroke-width="1.2"/>
 <rect x="24.2" y="277.7" width="4" height="2" fill="#e03030"/><rect x="24.2" y="279.7" width="4" height="2" fill="#f0d020"/><rect x="24.2" y="281.7" width="4" height="2" fill="#30d040"/><rect x="24.2" y="283.7" width="4" height="2" fill="#20c0e0"/><rect x="24.2" y="285.7" width="4" height="1.6" fill="#2040e0"/>
 <!-- icon 4 -->
 <g fill="none" stroke="#555" stroke-width="1">
  <rect x="11.5" y="309.5" width="8" height="6"/><path d="M11.5,311.5 h8 M15,315.5 v15 M15,322 h19 M15,330 h4 q3,-5 6,0 h8" />
 </g>
 <path d="M18,330 q3,-6 7,0" stroke="#c04040" stroke-width="1" fill="none"/>
 <!-- icon 5 -->
 <rect x="11.5" y="352.5" width="9" height="10" fill="#fff" stroke="#555" stroke-width="0.9"/><path d="M13.5,354.5 h2 v1.5 h-2 z M13.5,357.5 h2 v1.5 h-2 z M13.5,360 h2 v1.5 h-2 z" fill="none" stroke="#444" stroke-width="0.6"/>
 <g><rect x="20" y="353" width="3" height="3" fill="#e03030"/><rect x="23" y="353" width="3" height="3" fill="#f06020"/><rect x="26" y="353" width="3" height="3" fill="#e0d020"/><rect x="29" y="353" width="3" height="3" fill="#e03030"/>
 <rect x="20" y="356" width="3" height="3" fill="#40c040"/><rect x="23" y="356" width="3" height="3" fill="#e0d020"/><rect x="26" y="356" width="3" height="3" fill="#f06020"/><rect x="29" y="356" width="3" height="3" fill="#e0d020"/>
 <rect x="20" y="359" width="3" height="3" fill="#20c0d0"/><rect x="23" y="359" width="3" height="3" fill="#40c040"/><rect x="26" y="359" width="3" height="3" fill="#e0d020"/><rect x="29" y="359" width="3" height="3" fill="#40c040"/></g>
 <path d="M13,364 v5 h4 M15,367 l2,2 l-2,2" fill="none" stroke="#222" stroke-width="1.1"/>
 <path d="M18.5,366.5 h14 v10 h-14 z M18.5,370 h14 M18.5,373.5 h14 M22,366.5 v10 M25.5,366.5 v10 M29,366.5 v10" fill="none" stroke="#555" stroke-width="0.8"/>
 <path d="M20,376 q4,-8 10,-6" stroke="#c03030" stroke-width="0.9" fill="none"/>
 <!-- icon 6 grid -->
 <g fill="none" stroke="#444" stroke-width="1.1"><rect x="11.5" y="396.5" width="23" height="23"/><rect x="15.5" y="400.5" width="6" height="6"/><rect x="24.5" y="400.5" width="6" height="6"/><rect x="15.5" y="409.5" width="6" height="6"/><rect x="24.5" y="409.5" width="6" height="6"/></g>
 <!-- cubes icon -->
<path d="M24,440.1 l5.0,2.9 l-5.0,2.9 l-5.0,-2.9 z" fill="#f2f2f2" stroke="#888" stroke-width="0.8"/><path d="M19.0,443.0 l5.0,2.9 v6.2 l-5.0,-2.9 z" fill="#dcdcdc" stroke="#888" stroke-width="0.8"/><path d="M29.0,443.0 l-5.0,2.9 v6.2 l5.0,-2.9 z" fill="#c8c8c8" stroke="#888" stroke-width="0.8"/><path d="M19,449.2 l5.0,2.9 l-5.0,2.9 l-5.0,-2.9 z" fill="#f2f2f2" stroke="#888" stroke-width="0.8"/><path d="M14.0,452.09999999999997 l5.0,2.9 v6.2 l-5.0,-2.9 z" fill="#dcdcdc" stroke="#888" stroke-width="0.8"/><path d="M24.0,452.09999999999997 l-5.0,2.9 v6.2 l5.0,-2.9 z" fill="#c8c8c8" stroke="#888" stroke-width="0.8"/><path d="M19,443 l5.0,2.9 l-5.0,2.9 l-5.0,-2.9 z" fill="#f2f2f2" stroke="#888" stroke-width="0.8"/><path d="M14.0,445.9 l5.0,2.9 v6.2 l-5.0,-2.9 z" fill="#dcdcdc" stroke="#888" stroke-width="0.8"/><path d="M24.0,445.9 l-5.0,2.9 v6.2 l5.0,-2.9 z" fill="#c8c8c8" stroke="#888" stroke-width="0.8"/>
 <!-- orange cube bowtie -->
 <path d="M11.5,488 l5,-3 l5,3 v6 l-5,3 l-5,-3 z" fill="#e88020" stroke="#a05010" stroke-width="0.6"/>
 <path d="M16.5,491 l5,-3 l5,3 v6 l-5,3 l-5,-3 z" fill="#e8e8e8" stroke="#777" stroke-width="0.6"/>
 <path d="M11.5,494 l5,3 v5 l-5,-3 z" fill="#ddd" stroke="#777" stroke-width="0.6"/>
 <path d="M21.5,495 l13,12 v-12 l-13,12 z" fill="#fff" stroke="#222" stroke-width="1.1"/>
 <!-- bracket -->
 <path d="M11.5,541 l8,-10 q3,-3 4,1 v9 l10,5 q1,3 -2,5 h-11 l-9,-5 z" fill="#e8e8e8" stroke="#555" stroke-width="1"/>
 <ellipse cx="23" cy="545.5" rx="4" ry="2" fill="#bbb" stroke="#555" stroke-width="0.8"/>
 <!-- bell -->
 <path d="M22.3,573 a1.5,1.5 0 1 1 0.01,0 M15,590 q2,-3 2,-8 q0,-6 5.3,-6.5 q5.3,0.5 5.3,6.5 q0,5 2,8 z M12,590.5 h20.6 M20,591 q2.3,4 4.6,0" fill="none" stroke="#444" stroke-width="1.1"/>
 <!-- books -->
 <path d="M15,621 l5,-3 l11,2 v18 l-5,3 l-11,-2 z M26,623 l5,-3 M26,623 v18 M15,621 l11,2 M18,619.5 l11,2" fill="#fff" stroke="#555" stroke-width="1"/>
 <!-- info -->
 <circle cx="19.5" cy="674" r="8" fill="#909090" stroke="#555" stroke-width="1"/>
 <path d="M19.5,671.5 v7" stroke="#fff" stroke-width="1.4"/><circle cx="19.5" cy="669" r="0.9" fill="#fff"/>
 <path d="M24,662 q6,1 8,8 M25,660 q8,1 10,10" fill="none" stroke="#bbb" stroke-width="0.9"/>
 <!-- globe window -->
 <rect x="11.5" y="704.5" width="23" height="23" fill="#fff" stroke="#444" stroke-width="1.1"/>
 <path d="M11.5,707.5 h23" stroke="#444" stroke-width="1"/>
 <circle cx="22.5" cy="717.5" r="7" fill="#3a9ab4"/><path d="M18,714 q3,1 4,-2 q2,3 5,2 l1,4 q-3,2 -5,4 q-2,-3 -5,-2 z" fill="#8fd0e0"/>
 <!-- clock -->
 <circle cx="22.5" cy="759.5" r="11" fill="none" stroke="#444" stroke-width="1.1"/>
 <path d="M22,752 v6 h-4" fill="none" stroke="#444" stroke-width="1.1"/>
 <!-- tools -->
 <path d="M11.5,796.5 h5 v-3 h5 v3 h13 v19 h-23 z" fill="#fff" stroke="#444" stroke-width="1.1"/>
 <path d="M14,800 l15,13 M30,800 l-15,13" stroke="#444" stroke-width="2"/><path d="M14,800 l3,-2 l2,3 M30,800 l-3,-1" stroke="#444" stroke-width="1.5" fill="none"/>
 <!-- rainbow pencil -->
 <defs><linearGradient id="gRain" x1="0" y1="0" x2="0" y2="1"><stop offset="0" stop-color="#e03020"/><stop offset="0.3" stop-color="#e8e020"/><stop offset="0.55" stop-color="#30d040"/><stop offset="0.75" stop-color="#20c8e0"/><stop offset="1" stop-color="#2030e0"/></linearGradient></defs>
 <rect x="13" y="837" width="8" height="22" fill="url(#gRain)"/>
 <path d="M22,842 l10,14" stroke="#222" stroke-width="2.2"/>
</svg>

<!-- navigator -->
<div class="a" style="left:40px;top:179px;width:337px;height:871px;background:#fff;border-right:1px solid #bdbdbd"></div>
<svg class="a" style="left:0;top:0" width="380" height="1050">
<rect x="48.5" y="205.5" width="319" height="19" fill="#f0eff1" stroke="#dcdcdc" stroke-width="1"/>
<rect x="49" y="224.5" width="318" height="20" fill="#ffffff"/>
<path d="M49,244.5 h318" stroke="#e6e5e8" stroke-width="1"/>
<rect x="49" y="244.5" width="318" height="20" fill="#f7f6f8"/>
<path d="M49,264.5 h318" stroke="#e6e5e8" stroke-width="1"/>
<rect x="49" y="264.5" width="318" height="20" fill="#ffffff"/>
<path d="M49,284.5 h318" stroke="#e6e5e8" stroke-width="1"/>
<rect x="49" y="284.5" width="318" height="20" fill="#f7f6f8"/>
<path d="M49,304.5 h318" stroke="#e6e5e8" stroke-width="1"/>
<rect x="49" y="304.5" width="318" height="20" fill="#ffffff"/>
<path d="M49,324.5 h318" stroke="#e6e5e8" stroke-width="1"/>
<rect x="49" y="324.5" width="318" height="20" fill="#f7f6f8"/>
<path d="M49,344.5 h318" stroke="#e6e5e8" stroke-width="1"/>
<rect x="49" y="344.5" width="318" height="20" fill="#ffffff"/>
<path d="M49,364.5 h318" stroke="#e6e5e8" stroke-width="1"/>
<rect x="49" y="364.5" width="318" height="20" fill="#f7f6f8"/>
<path d="M49,384.5 h318" stroke="#e6e5e8" stroke-width="1"/>
<rect x="49" y="384.5" width="318" height="20" fill="#ffffff"/>
<path d="M49,404.5 h318" stroke="#e6e5e8" stroke-width="1"/>
<rect x="49" y="404.5" width="318" height="20" fill="#f7f6f8"/>
<path d="M49,424.5 h318" stroke="#e6e5e8" stroke-width="1"/>
<rect x="49" y="424.5" width="318" height="20" fill="#ffffff"/>
<path d="M49,444.5 h318" stroke="#e6e5e8" stroke-width="1"/>
<rect x="49" y="444.5" width="318" height="20" fill="#f7f6f8"/>
<path d="M49,464.5 h318" stroke="#e6e5e8" stroke-width="1"/>
<rect x="49" y="464.5" width="318" height="20" fill="#ffffff"/>
<path d="M49,484.5 h318" stroke="#e6e5e8" stroke-width="1"/>
<rect x="49" y="484.5" width="318" height="20" fill="#f7f6f8"/>
<path d="M49,504.5 h318" stroke="#e6e5e8" stroke-width="1"/>
<rect x="49" y="504.5" width="318" height="20" fill="#ffffff"/>
<path d="M49,524.5 h318" stroke="#e6e5e8" stroke-width="1"/>
<rect x="49" y="524.5" width="318" height="20" fill="#f7f6f8"/>
<path d="M49,544.5 h318" stroke="#e6e5e8" stroke-width="1"/>
<rect x="49" y="544.5" width="318" height="20" fill="#ffffff"/>
<path d="M49,564.5 h318" stroke="#e6e5e8" stroke-width="1"/>
<rect x="49" y="564.5" width="318" height="20" fill="#f7f6f8"/>
<path d="M49,584.5 h318" stroke="#e6e5e8" stroke-width="1"/>
<rect x="49" y="584.5" width="318" height="20" fill="#ffffff"/>
<path d="M49,604.5 h318" stroke="#e6e5e8" stroke-width="1"/>
<rect x="49" y="604.5" width="318" height="20" fill="#f7f6f8"/>
<path d="M49,624.5 h318" stroke="#e6e5e8" stroke-width="1"/>
<rect x="49" y="624.5" width="318" height="20" fill="#ffffff"/>
<path d="M49,644.5 h318" stroke="#e6e5e8" stroke-width="1"/>
<rect x="49" y="644.5" width="318" height="20" fill="#f7f6f8"/>
<path d="M49,664.5 h318" stroke="#e6e5e8" stroke-width="1"/>
<rect x="49" y="664.5" width="318" height="20" fill="#ffffff"/>
<path d="M49,684.5 h318" stroke="#e6e5e8" stroke-width="1"/>
<rect x="49" y="684.5" width="318" height="20" fill="#f7f6f8"/>
<path d="M49,704.5 h318" stroke="#e6e5e8" stroke-width="1"/>
<rect x="49" y="704.5" width="318" height="20" fill="#ffffff"/>
<path d="M49,724.5 h318" stroke="#e6e5e8" stroke-width="1"/>
<rect x="49" y="724.5" width="318" height="20" fill="#f7f6f8"/>
<path d="M49,744.5 h318" stroke="#e6e5e8" stroke-width="1"/>
<rect x="49" y="744.5" width="318" height="20" fill="#ffffff"/>
<path d="M49,764.5 h318" stroke="#e6e5e8" stroke-width="1"/>
<rect x="49" y="764.5" width="318" height="20" fill="#f7f6f8"/>
<path d="M49,784.5 h318" stroke="#e6e5e8" stroke-width="1"/>
<rect x="49" y="784.5" width="318" height="20" fill="#ffffff"/>
<path d="M49,804.5 h318" stroke="#e6e5e8" stroke-width="1"/>
<rect x="49" y="804.5" width="318" height="20" fill="#f7f6f8"/>
<path d="M49,824.5 h318" stroke="#e6e5e8" stroke-width="1"/>
<rect x="49" y="824.5" width="318" height="20" fill="#ffffff"/>
<path d="M49,844.5 h318" stroke="#e6e5e8" stroke-width="1"/>
<rect x="49" y="844.5" width="318" height="20" fill="#f7f6f8"/>
<path d="M49,864.5 h318" stroke="#e6e5e8" stroke-width="1"/>
<rect x="49" y="864.5" width="318" height="20" fill="#ffffff"/>
<path d="M49,884.5 h318" stroke="#e6e5e8" stroke-width="1"/>
<rect x="49" y="884.5" width="318" height="20" fill="#f7f6f8"/>
<path d="M49,904.5 h318" stroke="#e6e5e8" stroke-width="1"/>
<rect x="49" y="904.5" width="318" height="20" fill="#ffffff"/>
<path d="M49,924.5 h318" stroke="#e6e5e8" stroke-width="1"/>
<rect x="49" y="924.5" width="318" height="20" fill="#f7f6f8"/>
<path d="M49,944.5 h318" stroke="#e6e5e8" stroke-width="1"/>
<rect x="49" y="944.5" width="318" height="20" fill="#ffffff"/>
<path d="M49,964.5 h318" stroke="#e6e5e8" stroke-width="1"/>
<rect x="49" y="964.5" width="318" height="0.5" fill="#f7f6f8"/>
<path d="M49,965.0 h318" stroke="#e6e5e8" stroke-width="1"/>
<path d="M208.5,205 V965" stroke="#e4e3e6" stroke-width="1"/>
<path d="M232.5,205 V965" stroke="#e4e3e6" stroke-width="1"/>
<path d="M256.5,205 V965" stroke="#e4e3e6" stroke-width="1"/>
<path d="M356.5,205 V965" stroke="#e4e3e6" stroke-width="1"/>
<path d="M48.5,205 V988 M367.5,205 V988" stroke="#dcdcdc" stroke-width="1"/>
<rect x="48.5" y="969.5" width="319" height="18" fill="#f0eff2" stroke="#e0e0e0" stroke-width="1"/>
<rect x="66" y="977" width="74" height="2" fill="#6e6e6e"/>
<rect x="48.5" y="989.5" width="319" height="5" fill="#d6d6d8" stroke="#bdbdbd" stroke-width="1"/>
<path d="M48,1019 h320 M48,1042 h320" stroke="#d4d4d6" stroke-width="1.2"/>
<path d="M57.5,1004 l5.5,4.7 l-5.5,4.7 z M57.5,1027.5 l5.5,4.7 l-5.5,4.7 z" fill="#2d6878"/>
<path d="M58.5,259 V395" stroke="#8a8a8a" stroke-width="1" stroke-dasharray="1,1.5"/>
<path d="M60,254.5 h8" stroke="#8a8a8a" stroke-width="1" stroke-dasharray="1,1.5"/>
<path d="M60,274.5 h8" stroke="#8a8a8a" stroke-width="1" stroke-dasharray="1,1.5"/>
<path d="M60,294.5 h8" stroke="#8a8a8a" stroke-width="1" stroke-dasharray="1,1.5"/>
<path d="M60,314.5 h8" stroke="#8a8a8a" stroke-width="1" stroke-dasharray="1,1.5"/>
<path d="M60,334.5 h8" stroke="#8a8a8a" stroke-width="1" stroke-dasharray="1,1.5"/>
<path d="M60,354.5 h8" stroke="#8a8a8a" stroke-width="1" stroke-dasharray="1,1.5"/>
<path d="M60,374.5 h8" stroke="#8a8a8a" stroke-width="1" stroke-dasharray="1,1.5"/>
<path d="M60,394.5 h8" stroke="#8a8a8a" stroke-width="1" stroke-dasharray="1,1.5"/>
<rect x="54.5" y="250.5" width="8" height="8" fill="#fff" stroke="#e0e0e0" stroke-width="1"/><path d="M55,254.5 h7 M58.5,251 v7" stroke="#333" stroke-width="1"/>
<rect x="54.5" y="270.5" width="8" height="8" fill="#fff" stroke="#e0e0e0" stroke-width="1"/><path d="M55,274.5 h7 M58.5,271 v7" stroke="#333" stroke-width="1"/>
<g fill="none" stroke="#3a3ab0" stroke-width="1"><path d="M49,188 l5,-3 l5,2 l-2,4 l-5,1 z"/><path d="M51,193 v6 M51,196 h3"/><rect x="55.5" y="194.5" width="5" height="5"/><path d="M58,194.5 v5 M55.5,197 h5"/><path d="M58,190 h4"/></g>
<rect x="354.5" y="186.5" width="11" height="10" fill="none" stroke="#222" stroke-width="1.4"/><path d="M354.5,187.5 h11" stroke="#222" stroke-width="2"/>
<path d="M50.5,234 l4,-3.5 h9.5 l-4,3.5 z" fill="#8a8ad8" stroke="#3a3aa0" stroke-width="0.7"/><path d="M60,234 l4,-3.5 v7 l-4,3.5 z" fill="#7a7ad0" stroke="#3a3aa0" stroke-width="0.7"/><rect x="50.5" y="234" width="9.5" height="7" fill="#f0f040" stroke="#5a5a30" stroke-width="0.7"/><path d="M53.7,234 v7 M56.8,234 v7 M50.5,236.3 h9.5 M50.5,238.6 h9.5 M53,232.3 h9.5 M62,232 v7" stroke="#4a4a8a" stroke-width="0.6" fill="none"/>
<path d="M69.5,252.5 l3,-3 h11 l-3,3 z" fill="#f6f6a0" stroke="#777" stroke-width="0.7"/><path d="M80.5,252.5 l3,-3 v6.5 l-3,3 z" fill="#d8d8d8" stroke="#777" stroke-width="0.7"/><rect x="69.5" y="252.5" width="11" height="6.5" fill="#f0f020" stroke="#777" stroke-width="0.7"/>
<path d="M68.5,275 q7,-7 14,0 q-7,7 -14,0 z" fill="#fff" stroke="#333" stroke-width="1"/><circle cx="75.5" cy="275" r="3" fill="#333"/>
<path d="M88,269.5 h8 l4,5.5 l-4,5.5 h-8 l-4,-5.5 z" fill="none" stroke="#2aa0b0" stroke-width="1.2"/>
<path d="M70,293 l2,-4 l4,-1.5 l3,2 v4 l-3,3 l-4,-0.5 z" fill="#d8d8d8" stroke="#444" stroke-width="0.8"/><g fill="#fff" stroke="#444" stroke-width="0.7"><circle cx="72" cy="289" r="1.2"/><circle cx="76" cy="287.5" r="1.2"/><circle cx="79" cy="289.5" r="1.2"/><circle cx="69.5" cy="293" r="1.2"/><circle cx="72" cy="297" r="1.2"/></g><rect x="74.5" y="292.5" width="9" height="10" fill="#fff" stroke="#222" stroke-width="1.1"/><path d="M76.5,294.5 h2 v2 h-2 z M80,295.5 h2 M76.5,299 l1,1 l1.5,-2 M80,299.5 h2" fill="none" stroke="#222" stroke-width="0.7"/>
<g fill="none" stroke="#c85080" stroke-width="1"><path d="M75.5,309 v5.5 M75.5,314.5 l-6,4.5 M75.5,314.5 l6,4.5 M70.5,313 l5,-3.5 l5,3.5 v5 l-5,2.5 l-5,-2.5 z"/></g><g fill="#c85080"><circle cx="75.5" cy="308" r="1.2"/><circle cx="69.3" cy="319.3" r="1.2"/><circle cx="81.7" cy="319.3" r="1.2"/></g>
<path d="M74,339.5 h-5.5 v-11 h14 v5" fill="#fff" stroke="#4a6ac0" stroke-width="1"/><rect x="70" y="328" width="5" height="2" fill="#3ab060"/><path d="M69,331.5 h13" stroke="#3ab060" stroke-width="0.8"/><circle cx="72.2" cy="335.7" r="1.4" fill="#2aa040"/><circle cx="79.5" cy="338.5" r="3.2" fill="none" stroke="#c01818" stroke-width="1.3"/><path d="M79.5,333.5 v10 M74.5,338.5 h10" stroke="#c01818" stroke-width="1.1"/>
<rect x="69.5" y="348.5" width="13.5" height="13.5" fill="#fff" stroke="#999" stroke-width="0.9"/><g fill="#fff" stroke="#888" stroke-width="0.8"><rect x="68.5" y="347.5" width="2" height="2"/><rect x="82" y="347.5" width="2" height="2"/><rect x="68.5" y="361" width="2" height="2"/><rect x="82" y="361" width="2" height="2"/></g><path d="M72.5,352.5 l3,-1.5 l3.5,1 v5.5 l-3,1.8 l-3.5,-1.2 z" fill="#d8782a" stroke="#a05018" stroke-width="0.6"/><path d="M75.5,353 l3.5,-1 M75.5,353 v5.8" stroke="#f0a050" stroke-width="0.6"/>
<text x="67" y="378.5" font-family="Liberation Serif" font-weight="700" font-size="9" fill="#222">F[x]</text>
<path d="M68.5,390 l3,-2.5 h10 l-3,2.5 z" fill="#8aa0e0" stroke="#3a4ab0" stroke-width="0.8"/><rect x="74.5" y="391.5" width="9" height="11" fill="#fff" stroke="#4a5ab0" stroke-width="1"/><circle cx="78.3" cy="391.2" r="2.3" fill="#e0c090"/><path d="M76.5,395.5 h1.5 M79,395.5 h3 M76.5,398.5 h1.5 M79,398.5 h3 M76.5,401 h1.5" stroke="#4a5ab0" stroke-width="0.8"/>

</svg>
<div class="t" style="left:66px;top:184px;color:#222;font-size:12px;line-height:14px">Simulation Navigator - Standard Mode</div>
<div class="t" style="left:55.5px;top:208.5px;color:#222;font-size:12px;line-height:14px">Name</div>
<div class="t" style="left:215px;top:208.5px;color:#222;font-size:12px;line-height:14px">C.</div>
<div class="t" style="left:239px;top:208.5px;color:#222;font-size:12px;line-height:14px">S..</div>
<div class="t" style="left:263px;top:208.5px;color:#222;font-size:12px;line-height:14px">Status</div>
<div class="t" style="left:362px;top:208.5px;color:#222;font-size:12px;line-height:14px">S</div>
<div class="t" style="left:68px;top:228px;color:#2a2a90;font-size:12px;line-height:14px">Torque Arm_fem1.fem</div>
<div class="t" style="left:261px;top:228px;color:#3a2a90;font-size:12px;line-height:14px">Displayed &amp; W...</div>
<div class="t" style="left:87px;top:248px;color:#222;font-size:12px;line-height:14px">Torque Arm_fem1_i....</div>
<div class="t" style="left:103px;top:268px;color:#222;font-size:12px;line-height:14px">Polygon Geometry</div>
<div class="t" style="left:261px;top:268px;color:#222;font-size:12px;line-height:14px">1 bodies</div>
<div class="t" style="left:87px;top:288px;color:#222;font-size:12px;line-height:14px">Mesh Controls</div>
<div class="t" style="left:87px;top:308px;color:#222;font-size:12px;line-height:14px">CSYS</div>
<div class="t" style="left:87px;top:328px;color:#222;font-size:12px;line-height:14px">Selection Recipes</div>
<div class="t" style="left:261px;top:328px;color:#222;font-size:12px;line-height:14px">No recipes</div>
<div class="t" style="left:87px;top:348px;color:#222;font-size:12px;line-height:14px">Groups</div>
<div class="t" style="left:261px;top:348px;color:#222;font-size:12px;line-height:14px">No groups</div>
<div class="t" style="left:87px;top:368px;color:#222;font-size:12px;line-height:14px">Fields</div>
<div class="t" style="left:87px;top:388px;color:#222;font-size:12px;line-height:14px">Modeling Objects</div>
<div class="t" style="left:71.5px;top:1001.5px;color:#3a6a7a;font-size:13.3px;line-height:16px">Simulation File View</div>
<div class="t" style="left:71.5px;top:1024.5px;color:#3a6a7a;font-size:13.3px;line-height:16px">Preview</div>
<svg class="a" style="left:0;top:0" width="380" height="400" overflow="visible"><path d="M315.5,346.8 L315.5,377.3 L323.0,370.8 L328.0,383.8 L334.0,381.3 L329.0,369.3 L339.5,369.3Z" fill="#f8f8f8" stroke="#111" stroke-width="2.4" stroke-linejoin="round"/></svg>

<!-- tabs -->
<div class="a" style="left:659px;top:179px;width:216px;height:24px;background:#0f6e8b"></div>
<div class="a" style="left:377px;top:203px;width:1503px;height:2px;background:#126f8c"></div>
<svg class="a" style="left:0;top:0" width="1920" height="210">
 <!-- discovery center icon -->
 <path d="M385,185 l5,-2 l4,2 l5,-2 v14 l-5,2 l-4,-2 l-5,2 z M390,183 v14 M394,185 v14" fill="#fff" stroke="#444" stroke-width="1"/>
 <rect x="384" y="182" width="6" height="6" fill="#d82030"/>
 <circle cx="389" cy="195" r="3.5" fill="#fff" stroke="#444" stroke-width="1"/>
 <!-- prt icon -->
 <g><path d="M521.5,185 v12 h8" fill="none" stroke="#444" stroke-width="1"/><path d="M523,195 l2,-6 l2,3 l2,-4" fill="none" stroke="#c03030" stroke-width="1"/><ellipse cx="533" cy="190.5" rx="4" ry="6" fill="#f0e040" stroke="#b0a020" stroke-width="0.8"/></g>
 <path d="M628.5,188 v8.5 h8 v-5 M631,186 h4 l2,2 l-4,4" fill="none" stroke="#333" stroke-width="1.1"/>
 <!-- fem icon -->
 <g><path d="M665.5,185 v12 h8" fill="none" stroke="#2a3060" stroke-width="1"/><path d="M667,195 l2,-6 l2,3 l2,-4" fill="none" stroke="#c03030" stroke-width="1"/><ellipse cx="676.5" cy="190.5" rx="4" ry="6" fill="#f0e040" stroke="#b0a020" stroke-width="0.8"/></g>
 <path d="M844.5,188 v8.5 h8 v-5 M847,186 h4 l2,2 l-4,4" fill="none" stroke="#fff" stroke-width="1.2"/>
 <path d="M860.5,186.5 l7.5,7.5 M868,186.5 l-7.5,7.5" stroke="#fff" stroke-width="2"/>
 <!-- sim icon -->
 <g><path d="M881.5,185 v12 h8" fill="none" stroke="#444" stroke-width="1"/><path d="M883,195 l2,-6 l2,3 l2,-4" fill="none" stroke="#c03030" stroke-width="1"/><ellipse cx="893" cy="190.5" rx="4" ry="6" fill="#f0e040" stroke="#b0a020" stroke-width="0.8"/></g>
 <path d="M1090.5,188 v8.5 h8 v-5 M1093,186 h4 l2,2 l-4,4" fill="none" stroke="#333" stroke-width="1.1"/>
</svg>
<div class="t" style="left:404px;top:184px">Discovery Center</div>
<div class="t" style="left:541px;top:184px">Torque Arm.prt</div>
<div class="t" style="left:685px;top:184px;color:#fff">(FEM) Torque Arm_fem1.fem</div>
<div class="t" style="left:901px;top:184px">(Simulation) Torque Arm_sim1.sim</div>

<!-- graphics -->
<div class="a" style="left:378px;top:205px;width:1500px;height:845px;background:#fff"></div>
<svg width="1920" height="1080" viewBox="0 0 1920 1080" style="position:absolute;left:0;top:0">
<defs>
<linearGradient id="gSide" x1="0" y1="0" x2="0" y2="1"><stop offset="0" stop-color="#7e7a63"/><stop offset="0.55" stop-color="#77735d"/><stop offset="1" stop-color="#65624e"/></linearGradient>
<linearGradient id="gHole" x1="0.92" y1="0.78" x2="0.08" y2="0.22"><stop offset="0" stop-color="#57553f"/><stop offset="0.5" stop-color="#6f6c57"/><stop offset="1" stop-color="#9c9880"/></linearGradient>
<linearGradient id="gHoleC" x1="0.92" y1="0.78" x2="0.08" y2="0.22"><stop offset="0" stop-color="#4a483a"/><stop offset="1" stop-color="#6d6a56"/></linearGradient>
<linearGradient id="gWall" x1="0" y1="0" x2="1" y2="0"><stop offset="0" stop-color="#4e4b3c"/><stop offset="1" stop-color="#6e6a55"/></linearGradient>
<linearGradient id="gBossWall" x1="0" y1="0" x2="1" y2="1"><stop offset="0" stop-color="#6a6753"/><stop offset="1" stop-color="#5c5947"/></linearGradient>
<linearGradient id="gBossHole" x1="0.86" y1="0.15" x2="0.14" y2="0.85"><stop offset="0" stop-color="#5a5848"/><stop offset="0.6" stop-color="#7f7c66"/><stop offset="1" stop-color="#8e8b74"/></linearGradient>
<linearGradient id="gRim" x1="0.86" y1="0.15" x2="0.14" y2="0.85"><stop offset="0.45" stop-color="#cfcbb0" stop-opacity="0"/><stop offset="0.75" stop-color="#d4d0b4" stop-opacity="1"/></linearGradient>
<linearGradient id="gRimD" x1="0.86" y1="0.15" x2="0.14" y2="0.85"><stop offset="0.45" stop-color="#34332a" stop-opacity="0"/><stop offset="0.7" stop-color="#34332a" stop-opacity="1"/></linearGradient>
<linearGradient id="gShadowR" x1="0.14" y1="0.15" x2="0.86" y2="0.85"><stop offset="0.3" stop-color="#3a382c" stop-opacity="0"/><stop offset="1" stop-color="#3a382c" stop-opacity="0.35"/></linearGradient>
<linearGradient id="gRimUL" x1="0.14" y1="0.85" x2="0.86" y2="0.15"><stop offset="0.4" stop-color="#d4d0b4" stop-opacity="0"/><stop offset="0.8" stop-color="#d4d0b4" stop-opacity="1"/></linearGradient>
<radialGradient id="gShade" cx="0.5" cy="0.5" r="0.5"><stop offset="0.6" stop-color="#000" stop-opacity="0.07"/><stop offset="1" stop-color="#000" stop-opacity="0"/></radialGradient>

<clipPath id="cPocket"><circle r="1" transform="matrix(2.203 -189.898 159.220 -39.836 982.62 668.88)" vector-effect="non-scaling-stroke" /></clipPath>
<clipPath id="cCH"><circle r="1" transform="matrix(1.224 -105.499 88.456 -22.131 976.62 667.88)" vector-effect="non-scaling-stroke" /></clipPath>
<filter id="fBlur" x="-0.2" y="-0.2" width="1.4" height="1.4"><feGaussianBlur stdDeviation="3.5"/></filter>
<clipPath id="cB0"><circle r="1" transform="matrix(0.300 -25.872 21.693 -5.427 985.54 417.69)" vector-effect="non-scaling-stroke" /></clipPath>
<clipPath id="cB1"><circle r="1" transform="matrix(0.300 -25.872 21.693 -5.427 1133.61 454.00)" vector-effect="non-scaling-stroke" /></clipPath>
<clipPath id="cB2"><circle r="1" transform="matrix(0.300 -25.872 21.693 -5.427 1193.23 616.18)" vector-effect="non-scaling-stroke" /></clipPath>
<clipPath id="cB3"><circle r="1" transform="matrix(0.300 -25.872 21.693 -5.427 1129.49 809.23)" vector-effect="non-scaling-stroke" /></clipPath>
<clipPath id="cB4"><circle r="1" transform="matrix(0.300 -25.872 21.693 -5.427 979.71 920.06)" vector-effect="non-scaling-stroke" /></clipPath>
<clipPath id="cB5"><circle r="1" transform="matrix(0.300 -25.872 21.693 -5.427 831.64 883.75)" vector-effect="non-scaling-stroke" /></clipPath>
<clipPath id="cB6"><circle r="1" transform="matrix(0.300 -25.872 21.693 -5.427 772.02 721.57)" vector-effect="non-scaling-stroke" /></clipPath>
<clipPath id="cB7"><circle r="1" transform="matrix(0.300 -25.872 21.693 -5.427 835.76 528.52)" vector-effect="non-scaling-stroke" /></clipPath>
<clipPath id="cBH"><circle r="1" transform="matrix(0.344 -29.640 24.852 -6.218 1465.39 555.84)" vector-effect="non-scaling-stroke" /></clipPath>
</defs>
<path d="M716.1,729.2 L716.1,726.6 L716.1,724.1 L716.1,721.5 L716.2,718.9 L716.3,716.3 L716.4,713.7 L716.5,711.1 L716.6,708.5 L716.8,705.8 L717.0,703.2 L717.1,700.6 L717.4,698.0 L717.6,695.4 L717.8,692.7 L718.1,690.1 L718.4,687.5 L718.7,684.8 L719.0,682.2 L719.3,679.6 L719.7,676.9 L720.1,674.3 L720.5,671.6 L720.9,669.0 L721.3,666.4 L721.8,663.7 L722.3,661.1 L722.7,658.4 L723.2,655.8 L723.8,653.1 L724.3,650.5 L724.9,647.9 L725.5,645.2 L726.1,642.6 L726.7,639.9 L727.3,637.3 L728.0,634.7 L728.6,632.0 L729.3,629.4 L730.0,626.8 L730.8,624.2 L731.5,621.5 L732.3,618.9 L733.0,616.3 L733.8,613.7 L734.7,611.1 L735.5,608.5 L736.3,605.9 L737.2,603.3 L738.1,600.7 L739.0,598.1 L739.9,595.5 L740.8,593.0 L741.8,590.4 L742.8,587.8 L743.8,585.3 L744.8,582.7 L745.8,580.2 L746.8,577.6 L747.9,575.1 L748.9,572.6 L750.0,570.0 L751.1,567.5 L752.2,565.0 L753.4,562.5 L754.5,560.0 L755.7,557.5 L756.9,555.1 L758.1,552.6 L759.3,550.1 L760.5,547.7 L761.8,545.2 L763.0,542.8 L764.3,540.4 L765.6,538.0 L766.9,535.6 L768.2,533.2 L769.6,530.8 L770.9,528.4 L772.3,526.0 L773.7,523.7 L775.0,521.3 L776.5,519.0 L777.9,516.7 L779.3,514.3 L780.8,512.0 L782.2,509.8 L783.7,507.5 L785.2,505.2 L786.7,502.9 L788.2,500.7 L789.8,498.5 L791.3,496.3 L792.9,494.0 L794.5,491.9 L796.1,489.7 L797.7,487.5 L799.3,485.4 L800.9,483.2 L802.5,481.1 L804.2,479.0 L805.8,476.9 L807.5,474.8 L809.2,472.7 L810.9,470.7 L812.6,468.6 L814.3,466.6 L816.1,464.6 L817.8,462.6 L819.6,460.6 L821.3,458.6 L823.1,456.7 L824.9,454.7 L826.7,452.8 L828.5,450.9 L830.3,449.0 L832.2,447.2 L834.0,445.3 L835.8,443.5 L837.7,441.6 L839.6,439.8 L841.5,438.0 L843.3,436.3 L845.2,434.5 L847.1,432.8 L849.1,431.1 L851.0,429.4 L852.9,427.7 L854.9,426.0 L856.8,424.4 L858.8,422.7 L860.7,421.1 L862.7,419.5 L864.7,417.9 L866.7,416.4 L868.7,414.8 L870.7,413.3 L872.7,411.8 L874.7,410.3 L876.7,408.9 L878.8,407.4 L880.8,406.0 L882.9,404.6 L884.9,403.2 L887.0,401.9 L889.0,400.5 L891.1,399.2 L893.2,397.9 L895.3,396.6 L897.3,395.3 L899.4,394.1 L901.5,392.9 L903.6,391.7 L905.7,390.5 L907.8,389.3 L910.0,388.2 L912.1,387.1 L914.2,386.0 L916.3,384.9 L918.4,383.8 L920.6,382.8 L922.7,381.8 L924.9,380.8 L927.0,379.8 L929.1,378.8 L931.3,377.9 L933.4,377.0 L935.6,376.1 L937.8,375.3 L939.9,374.4 L942.1,373.6 L944.2,372.8 L946.4,372.0 L948.6,371.3 L950.7,370.5 L952.9,369.8 L955.1,369.1 L957.2,368.5 L959.4,367.8 L961.6,367.2 L963.7,366.6 L965.9,366.0 L968.1,365.5 L970.2,364.9 L972.4,364.4 L974.6,363.9 L976.7,363.5 L978.9,363.0 L981.1,362.6 L983.2,362.2 L985.4,361.9 L987.6,361.5 L989.7,361.2 L991.9,360.9 L994.0,360.6 L996.2,360.3 L998.3,360.1 L1000.5,359.9 L1002.6,359.7 L1004.8,359.5 L1006.9,359.4 L1009.0,359.3 L1011.2,359.2 L1013.3,359.1 L1015.4,359.1 L1017.5,359.0 L1019.7,359.0 L1021.8,359.0 L1023.9,359.1 L1026.0,359.1 L1028.1,359.2 L1030.2,359.3 L1032.3,359.5 L1034.4,359.6 L1036.4,359.8 L1038.5,360.0 L1040.6,360.2 L1042.6,360.5 L1044.7,360.8 L1046.7,361.1 L1048.8,361.4 L1050.8,361.7 L1052.9,362.1 L1467.0,439.7 L1468.4,440.0 L1469.8,440.3 L1471.2,440.6 L1472.6,441.0 L1474.0,441.4 L1475.3,441.8 L1476.7,442.3 L1478.0,442.8 L1496.0,449.8 L1497.3,450.3 L1498.6,450.9 L1499.9,451.4 L1501.2,452.1 L1502.4,452.7 L1503.7,453.4 L1504.9,454.1 L1506.1,454.8 L1507.3,455.6 L1508.5,456.4 L1509.7,457.2 L1510.8,458.1 L1511.9,458.9 L1513.1,459.9 L1514.2,460.8 L1515.2,461.8 L1516.3,462.7 L1517.3,463.8 L1518.4,464.8 L1519.4,465.9 L1520.3,467.0 L1521.3,468.1 L1522.2,469.2 L1523.2,470.4 L1524.1,471.6 L1524.9,472.8 L1525.8,474.1 L1526.6,475.3 L1527.5,476.6 L1528.3,477.9 L1529.0,479.3 L1529.8,480.6 L1530.5,482.0 L1531.2,483.4 L1531.9,484.8 L1532.5,486.3 L1533.2,487.7 L1533.8,489.2 L1534.3,490.7 L1534.9,492.2 L1535.4,493.8 L1535.9,495.3 L1536.4,496.9 L1536.9,498.5 L1537.3,500.1 L1537.7,501.7 L1538.1,503.3 L1538.5,505.0 L1538.8,506.6 L1539.1,508.3 L1539.4,510.0 L1539.6,511.7 L1539.9,513.4 L1540.1,515.1 L1540.2,516.8 L1540.4,518.6 L1540.5,520.3 L1540.6,522.1 L1540.7,523.9 L1540.7,525.7 L1540.7,527.4 L1540.7,529.2 L1540.7,531.0 L1540.6,532.8 L1540.6,534.7 L1540.4,536.5 L1540.3,538.3 L1540.1,540.1 L1539.9,541.9 L1539.7,543.8 L1539.5,545.6 L1539.2,547.4 L1538.9,549.3 L1538.6,551.1 L1538.3,553.0 L1537.9,554.8 L1537.5,556.6 L1537.1,558.5 L1536.6,560.3 L1536.1,562.1 L1535.6,563.9 L1535.1,565.8 L1534.6,567.6 L1534.0,569.4 L1533.4,571.2 L1532.8,573.0 L1532.1,574.8 L1531.5,576.6 L1530.8,578.3 L1530.1,580.1 L1529.3,581.9 L1528.6,583.6 L1527.8,585.4 L1527.0,587.1 L1526.2,588.8 L1525.3,590.5 L1524.4,592.2 L1523.5,593.9 L1522.6,595.6 L1521.7,597.2 L1520.7,598.9 L1519.8,600.5 L1518.8,602.1 L1517.8,603.7 L1516.7,605.3 L1515.7,606.8 L1514.6,608.4 L1513.5,609.9 L1512.4,611.4 L1511.3,612.9 L1510.1,614.4 L1509.0,615.8 L1507.8,617.3 L1506.6,618.7 L1505.4,620.1 L1504.2,621.5 L1502.9,622.8 L1501.7,624.1 L1500.4,625.4 L1499.1,626.7 L1497.8,628.0 L1496.5,629.2 L1495.2,630.4 L1493.9,631.6 L1492.5,632.8 L1491.2,633.9 L1489.8,635.0 L1488.4,636.1 L1487.0,637.2 L1485.6,638.2 L1484.2,639.2 L1482.8,640.2 L1064.4,926.1 L1062.3,927.5 L1060.3,928.9 L1058.2,930.2 L1056.2,931.6 L1054.1,932.9 L1052.0,934.1 L1049.9,935.4 L1047.8,936.7 L1045.7,937.9 L1043.6,939.1 L1041.5,940.3 L1039.4,941.4 L1037.3,942.6 L1035.2,943.7 L1033.1,944.8 L1030.9,945.9 L1028.8,946.9 L1026.7,948.0 L1024.5,949.0 L1022.4,950.0 L1020.3,950.9 L1018.1,951.9 L1016.0,952.8 L1013.8,953.7 L1011.7,954.6 L1009.5,955.5 L1007.3,956.3 L1005.2,957.2 L1003.0,958.0 L1000.9,958.7 L998.7,959.5 L996.5,960.2 L994.4,960.9 L992.2,961.6 L990.0,962.3 L987.9,962.9 L985.7,963.5 L983.5,964.1 L981.4,964.7 L979.2,965.3 L977.0,965.8 L974.8,966.3 L972.7,966.8 L970.5,967.3 L968.3,967.7 L966.2,968.1 L964.0,968.5 L961.9,968.9 L959.7,969.2 L957.5,969.6 L955.4,969.9 L953.2,970.2 L951.1,970.4 L948.9,970.6 L934.9,972.1 L932.8,972.4 L930.6,972.5 L928.5,972.7 L926.4,972.9 L924.2,973.0 L922.1,973.1 L920.0,973.1 L917.8,973.2 L915.7,973.2 L913.6,973.2 L911.5,973.2 L909.4,973.2 L907.3,973.1 L905.2,973.0 L903.1,972.9 L901.0,972.8 L898.9,972.6 L896.8,972.4 L894.7,972.2 L892.7,972.0 L890.6,971.8 L888.6,971.5 L886.5,971.2 L884.5,970.9 L882.4,970.5 L880.4,970.2 L878.4,969.8 L876.4,969.4 L874.3,968.9 L872.3,968.5 L870.3,968.0 L868.4,967.5 L866.4,967.0 L864.4,966.4 L862.4,965.9 L860.5,965.3 L858.5,964.7 L856.6,964.0 L854.7,963.4 L852.7,962.7 L850.8,962.0 L848.9,961.3 L847.0,960.5 L845.1,959.8 L843.3,959.0 L841.4,958.2 L839.5,957.3 L837.7,956.5 L835.8,955.6 L834.0,954.7 L832.2,953.8 L830.4,952.8 L828.6,951.9 L826.8,950.9 L825.0,949.9 L823.3,948.8 L821.5,947.8 L819.8,946.7 L818.0,945.6 L816.3,944.5 L814.6,943.4 L812.9,942.2 L811.2,941.0 L809.6,939.9 L807.9,938.6 L806.2,937.4 L804.6,936.1 L803.0,934.9 L801.4,933.6 L799.8,932.2 L798.2,930.9 L796.6,929.6 L795.1,928.2 L793.5,926.8 L792.0,925.4 L790.5,923.9 L789.0,922.5 L787.5,921.0 L786.0,919.5 L784.5,918.0 L783.1,916.5 L781.6,914.9 L780.2,913.3 L778.8,911.8 L777.4,910.2 L776.0,908.5 L774.7,906.9 L773.3,905.2 L772.0,903.6 L770.7,901.9 L769.4,900.1 L768.1,898.4 L766.8,896.7 L765.5,894.9 L764.3,893.1 L763.1,891.3 L761.9,889.5 L760.7,887.7 L759.5,885.8 L758.3,884.0 L757.2,882.1 L756.0,880.2 L754.9,878.3 L753.8,876.3 L752.7,874.4 L751.7,872.4 L750.6,870.4 L749.6,868.5 L748.6,866.4 L747.6,864.4 L746.6,862.4 L745.6,860.3 L741.6,851.8 L740.7,849.8 L739.8,847.7 L738.8,845.6 L737.9,843.5 L737.1,841.4 L736.2,839.2 L735.3,837.1 L734.5,834.9 L733.7,832.7 L732.9,830.6 L732.1,828.4 L731.4,826.1 L730.6,823.9 L729.9,821.7 L729.2,819.4 L728.5,817.2 L727.9,814.9 L727.2,812.6 L726.6,810.3 L726.0,808.0 L725.4,805.7 L724.8,803.3 L724.2,801.0 L723.7,798.6 L723.2,796.3 L722.7,793.9 L722.2,791.5 L721.7,789.1 L721.3,786.7 L720.8,784.3 L720.4,781.9 L720.0,779.5 L719.6,777.0 L719.3,774.6 L718.9,772.1 L718.6,769.7 L718.3,767.2 L718.0,764.7 L717.8,762.2 L717.5,759.7 L717.3,757.2 L717.1,754.7 L716.9,752.2 L716.8,749.6 L716.6,747.1 L716.5,744.6 L716.4,742.0 L716.3,739.5 L716.2,736.9 L716.1,734.4 L716.1,731.8Z" fill="url(#gSide)" stroke="#34332a" stroke-width="1.1"/>
<path d="M734.1,736.2 L734.1,733.6 L734.1,731.1 L734.1,728.5 L734.2,725.9 L734.3,723.3 L734.4,720.7 L734.5,718.1 L734.6,715.5 L734.8,712.8 L735.0,710.2 L735.1,707.6 L735.4,705.0 L735.6,702.4 L735.8,699.7 L736.1,697.1 L736.4,694.5 L736.7,691.8 L737.0,689.2 L737.3,686.6 L737.7,683.9 L738.1,681.3 L738.5,678.6 L738.9,676.0 L739.3,673.4 L739.8,670.7 L740.3,668.1 L740.7,665.4 L741.2,662.8 L741.8,660.1 L742.3,657.5 L742.9,654.9 L743.5,652.2 L744.1,649.6 L744.7,646.9 L745.3,644.3 L746.0,641.7 L746.6,639.0 L747.3,636.4 L748.0,633.8 L748.8,631.2 L749.5,628.5 L750.3,625.9 L751.0,623.3 L751.8,620.7 L752.7,618.1 L753.5,615.5 L754.3,612.9 L755.2,610.3 L756.1,607.7 L757.0,605.1 L757.9,602.5 L758.8,600.0 L759.8,597.4 L760.8,594.8 L761.8,592.3 L762.8,589.7 L763.8,587.2 L764.8,584.6 L765.9,582.1 L766.9,579.6 L768.0,577.0 L769.1,574.5 L770.2,572.0 L771.4,569.5 L772.5,567.0 L773.7,564.5 L774.9,562.1 L776.1,559.6 L777.3,557.1 L778.5,554.7 L779.8,552.2 L781.0,549.8 L782.3,547.4 L783.6,545.0 L784.9,542.6 L786.2,540.2 L787.6,537.8 L788.9,535.4 L790.3,533.0 L791.7,530.7 L793.0,528.3 L794.5,526.0 L795.9,523.7 L797.3,521.3 L798.8,519.0 L800.2,516.8 L801.7,514.5 L803.2,512.2 L804.7,509.9 L806.2,507.7 L807.8,505.5 L809.3,503.3 L810.9,501.0 L812.5,498.9 L814.1,496.7 L815.7,494.5 L817.3,492.4 L818.9,490.2 L820.5,488.1 L822.2,486.0 L823.8,483.9 L825.5,481.8 L827.2,479.7 L828.9,477.7 L830.6,475.6 L832.3,473.6 L834.1,471.6 L835.8,469.6 L837.6,467.6 L839.3,465.6 L841.1,463.7 L842.9,461.7 L844.7,459.8 L846.5,457.9 L848.3,456.0 L850.2,454.2 L852.0,452.3 L853.8,450.5 L855.7,448.6 L857.6,446.8 L859.5,445.0 L861.3,443.3 L863.2,441.5 L865.1,439.8 L867.1,438.1 L869.0,436.4 L870.9,434.7 L872.9,433.0 L874.8,431.4 L876.8,429.7 L878.7,428.1 L880.7,426.5 L882.7,424.9 L884.7,423.4 L886.7,421.8 L888.7,420.3 L890.7,418.8 L892.7,417.3 L894.7,415.9 L896.8,414.4 L898.8,413.0 L900.9,411.6 L902.9,410.2 L905.0,408.9 L907.0,407.5 L909.1,406.2 L911.2,404.9 L913.3,403.6 L915.3,402.3 L917.4,401.1 L919.5,399.9 L921.6,398.7 L923.7,397.5 L925.8,396.3 L928.0,395.2 L930.1,394.1 L932.2,393.0 L934.3,391.9 L936.4,390.8 L938.6,389.8 L940.7,388.8 L942.9,387.8 L945.0,386.8 L947.1,385.8 L949.3,384.9 L951.4,384.0 L953.6,383.1 L955.8,382.3 L957.9,381.4 L960.1,380.6 L962.2,379.8 L964.4,379.0 L966.6,378.3 L968.7,377.5 L970.9,376.8 L973.1,376.1 L975.2,375.5 L977.4,374.8 L979.6,374.2 L981.7,373.6 L983.9,373.0 L986.1,372.5 L988.2,371.9 L990.4,371.4 L992.6,370.9 L994.7,370.5 L996.9,370.0 L999.1,369.6 L1001.2,369.2 L1003.4,368.9 L1005.6,368.5 L1007.7,368.2 L1009.9,367.9 L1012.0,367.6 L1014.2,367.3 L1016.3,367.1 L1018.5,366.9 L1020.6,366.7 L1022.8,366.5 L1024.9,366.4 L1027.0,366.3 L1029.2,366.2 L1031.3,366.1 L1033.4,366.1 L1035.5,366.0 L1037.7,366.0 L1039.8,366.0 L1041.9,366.1 L1044.0,366.1 L1046.1,366.2 L1048.2,366.3 L1050.3,366.5 L1052.4,366.6 L1054.4,366.8 L1056.5,367.0 L1058.6,367.2 L1060.6,367.5 L1062.7,367.8 L1064.7,368.1 L1066.8,368.4 L1068.8,368.7 L1070.9,369.1 L1485.0,446.7 L1486.4,447.0 L1487.8,447.3 L1489.2,447.6 L1490.6,448.0 L1492.0,448.4 L1493.3,448.8 L1494.7,449.3 L1496.0,449.8 L1497.3,450.3 L1498.6,450.9 L1499.9,451.4 L1501.2,452.1 L1502.4,452.7 L1503.7,453.4 L1504.9,454.1 L1506.1,454.8 L1507.3,455.6 L1508.5,456.4 L1509.7,457.2 L1510.8,458.1 L1511.9,458.9 L1513.1,459.9 L1514.2,460.8 L1515.2,461.8 L1516.3,462.7 L1517.3,463.8 L1518.4,464.8 L1519.4,465.9 L1520.3,467.0 L1521.3,468.1 L1522.2,469.2 L1523.2,470.4 L1524.1,471.6 L1524.9,472.8 L1525.8,474.1 L1526.6,475.3 L1527.5,476.6 L1528.3,477.9 L1529.0,479.3 L1529.8,480.6 L1530.5,482.0 L1531.2,483.4 L1531.9,484.8 L1532.5,486.3 L1533.2,487.7 L1533.8,489.2 L1534.3,490.7 L1534.9,492.2 L1535.4,493.8 L1535.9,495.3 L1536.4,496.9 L1536.9,498.5 L1537.3,500.1 L1537.7,501.7 L1538.1,503.3 L1538.5,505.0 L1538.8,506.6 L1539.1,508.3 L1539.4,510.0 L1539.6,511.7 L1539.9,513.4 L1540.1,515.1 L1540.2,516.8 L1540.4,518.6 L1540.5,520.3 L1540.6,522.1 L1540.7,523.9 L1540.7,525.7 L1540.7,527.4 L1540.7,529.2 L1540.7,531.0 L1540.6,532.8 L1540.6,534.7 L1540.4,536.5 L1540.3,538.3 L1540.1,540.1 L1539.9,541.9 L1539.7,543.8 L1539.5,545.6 L1539.2,547.4 L1538.9,549.3 L1538.6,551.1 L1538.3,553.0 L1537.9,554.8 L1537.5,556.6 L1537.1,558.5 L1536.6,560.3 L1536.1,562.1 L1535.6,563.9 L1535.1,565.8 L1534.6,567.6 L1534.0,569.4 L1533.4,571.2 L1532.8,573.0 L1532.1,574.8 L1531.5,576.6 L1530.8,578.3 L1530.1,580.1 L1529.3,581.9 L1528.6,583.6 L1527.8,585.4 L1527.0,587.1 L1526.2,588.8 L1525.3,590.5 L1524.4,592.2 L1523.5,593.9 L1522.6,595.6 L1521.7,597.2 L1520.7,598.9 L1519.8,600.5 L1518.8,602.1 L1517.8,603.7 L1516.7,605.3 L1515.7,606.8 L1514.6,608.4 L1513.5,609.9 L1512.4,611.4 L1511.3,612.9 L1510.1,614.4 L1509.0,615.8 L1507.8,617.3 L1506.6,618.7 L1505.4,620.1 L1504.2,621.5 L1502.9,622.8 L1501.7,624.1 L1500.4,625.4 L1499.1,626.7 L1497.8,628.0 L1496.5,629.2 L1495.2,630.4 L1493.9,631.6 L1492.5,632.8 L1491.2,633.9 L1489.8,635.0 L1488.4,636.1 L1487.0,637.2 L1485.6,638.2 L1484.2,639.2 L1482.8,640.2 L1064.4,926.1 L1062.3,927.5 L1060.3,928.9 L1058.2,930.2 L1056.2,931.6 L1054.1,932.9 L1052.0,934.1 L1049.9,935.4 L1047.8,936.7 L1045.7,937.9 L1043.6,939.1 L1041.5,940.3 L1039.4,941.4 L1037.3,942.6 L1035.2,943.7 L1033.1,944.8 L1030.9,945.9 L1028.8,946.9 L1026.7,948.0 L1024.5,949.0 L1022.4,950.0 L1020.3,950.9 L1018.1,951.9 L1016.0,952.8 L1013.8,953.7 L1011.7,954.6 L1009.5,955.5 L1007.3,956.3 L1005.2,957.2 L1003.0,958.0 L1000.9,958.7 L998.7,959.5 L996.5,960.2 L994.4,960.9 L992.2,961.6 L990.0,962.3 L987.9,962.9 L985.7,963.5 L983.5,964.1 L981.4,964.7 L979.2,965.3 L977.0,965.8 L974.8,966.3 L972.7,966.8 L970.5,967.3 L968.3,967.7 L966.2,968.1 L964.0,968.5 L961.9,968.9 L959.7,969.2 L957.5,969.6 L955.4,969.9 L953.2,970.2 L951.1,970.4 L948.9,970.6 L946.8,970.9 L944.6,971.0 L942.5,971.2 L940.4,971.4 L938.2,971.5 L936.1,971.6 L934.0,971.6 L931.8,971.7 L929.7,971.7 L927.6,971.7 L925.5,971.7 L923.4,971.7 L921.3,971.6 L919.2,971.5 L917.1,971.4 L915.0,971.3 L912.9,971.1 L910.8,970.9 L908.7,970.7 L906.7,970.5 L904.6,970.3 L902.6,970.0 L900.5,969.7 L898.5,969.4 L896.4,969.0 L894.4,968.7 L892.4,968.3 L890.4,967.9 L888.3,967.4 L886.3,967.0 L884.3,966.5 L882.4,966.0 L880.4,965.5 L878.4,964.9 L876.4,964.4 L874.5,963.8 L872.5,963.2 L870.6,962.5 L868.7,961.9 L866.7,961.2 L864.8,960.5 L862.9,959.8 L861.0,959.0 L859.1,958.3 L857.3,957.5 L855.4,956.7 L853.5,955.8 L851.7,955.0 L849.8,954.1 L848.0,953.2 L846.2,952.3 L844.4,951.3 L842.6,950.4 L840.8,949.4 L839.0,948.4 L837.3,947.3 L835.5,946.3 L833.8,945.2 L832.0,944.1 L830.3,943.0 L828.6,941.9 L826.9,940.7 L825.2,939.5 L823.6,938.4 L821.9,937.1 L820.2,935.9 L818.6,934.6 L817.0,933.4 L815.4,932.1 L813.8,930.7 L812.2,929.4 L810.6,928.1 L809.1,926.7 L807.5,925.3 L806.0,923.9 L804.5,922.4 L803.0,921.0 L801.5,919.5 L800.0,918.0 L798.5,916.5 L797.1,915.0 L795.6,913.4 L794.2,911.8 L792.8,910.3 L791.4,908.7 L790.0,907.0 L788.7,905.4 L787.3,903.7 L786.0,902.1 L784.7,900.4 L783.4,898.6 L782.1,896.9 L780.8,895.2 L779.5,893.4 L778.3,891.6 L777.1,889.8 L775.9,888.0 L774.7,886.2 L773.5,884.3 L772.3,882.5 L771.2,880.6 L770.0,878.7 L768.9,876.8 L767.8,874.8 L766.7,872.9 L765.7,870.9 L764.6,868.9 L763.6,867.0 L762.6,864.9 L761.6,862.9 L760.6,860.9 L759.6,858.8 L758.7,856.8 L757.8,854.7 L756.8,852.6 L755.9,850.5 L755.1,848.4 L754.2,846.2 L753.3,844.1 L752.5,841.9 L751.7,839.7 L750.9,837.6 L750.1,835.4 L749.4,833.1 L748.6,830.9 L747.9,828.7 L747.2,826.4 L746.5,824.2 L745.9,821.9 L745.2,819.6 L744.6,817.3 L744.0,815.0 L743.4,812.7 L742.8,810.3 L742.2,808.0 L741.7,805.6 L741.2,803.3 L740.7,800.9 L740.2,798.5 L739.7,796.1 L739.3,793.7 L738.8,791.3 L738.4,788.9 L738.0,786.5 L737.6,784.0 L737.3,781.6 L736.9,779.1 L736.6,776.7 L736.3,774.2 L736.0,771.7 L735.8,769.2 L735.5,766.7 L735.3,764.2 L735.1,761.7 L734.9,759.2 L734.8,756.6 L734.6,754.1 L734.5,751.6 L734.4,749.0 L734.3,746.5 L734.2,743.9 L734.1,741.4 L734.1,738.8Z" fill="#838068" stroke="#34332a" stroke-width="1"/>
<circle r="1" transform="matrix(2.203 -189.898 159.220 -39.836 982.62 668.88)" vector-effect="non-scaling-stroke" fill="url(#gWall)"/>
<g clip-path="url(#cPocket)"><circle r="1" transform="matrix(2.203 -189.898 159.220 -39.836 971.62 671.88)" vector-effect="non-scaling-stroke" fill="#838068" stroke="#34332a" stroke-width="0.8"/></g>
<g clip-path="url(#cPocket)"><g filter="url(#fBlur)"><circle r="1" transform="matrix(2.157 -185.879 155.851 -38.993 971.62 671.88)" vector-effect="non-scaling-stroke" fill="none" stroke="url(#gShadowR)" stroke-width="9"/></g></g>
<circle r="1" transform="matrix(2.203 -189.898 159.220 -39.836 982.62 668.88)" vector-effect="non-scaling-stroke" fill="none" stroke="#34332a" stroke-width="1"/>
<circle r="1" transform="matrix(1.224 -105.499 88.456 -22.131 976.62 667.88)" vector-effect="non-scaling-stroke" fill="url(#gHoleC)" stroke="#34332a" stroke-width="1"/>
<circle r="1" transform="matrix(1.201 -103.490 86.771 -21.710 976.62 667.88)" vector-effect="non-scaling-stroke" fill="none" stroke="url(#gRim)" stroke-width="1.6"/>
<circle r="1" transform="matrix(1.172 -100.978 84.665 -21.183 976.62 667.88)" vector-effect="non-scaling-stroke" fill="none" stroke="url(#gRimD)" stroke-width="0.8"/>
<g clip-path="url(#cCH)"><circle r="1" transform="matrix(1.224 -105.499 88.456 -22.131 967.62 664.38)" vector-effect="non-scaling-stroke" fill="#ffffff" stroke="#34332a" stroke-width="1.2"/></g>
<circle r="1" transform="matrix(0.300 -25.872 21.693 -5.427 985.54 417.69)" vector-effect="non-scaling-stroke" fill="url(#gHole)" stroke="#34332a" stroke-width="1"/>
<circle r="1" transform="matrix(0.280 -24.114 20.218 -5.059 985.54 417.69)" vector-effect="non-scaling-stroke" fill="none" stroke="url(#gRim)" stroke-width="1.6"/>
<circle r="1" transform="matrix(0.256 -22.105 18.534 -4.637 985.54 417.69)" vector-effect="non-scaling-stroke" fill="none" stroke="url(#gRimD)" stroke-width="0.8"/>
<g clip-path="url(#cB0)"><circle r="1" transform="matrix(0.300 -25.872 21.693 -5.427 967.54 410.69)" vector-effect="non-scaling-stroke" fill="#ffffff" stroke="#34332a" stroke-width="1.2"/></g>
<circle r="1" transform="matrix(0.300 -25.872 21.693 -5.427 1133.61 454.00)" vector-effect="non-scaling-stroke" fill="url(#gHole)" stroke="#34332a" stroke-width="1"/>
<circle r="1" transform="matrix(0.280 -24.114 20.218 -5.059 1133.61 454.00)" vector-effect="non-scaling-stroke" fill="none" stroke="url(#gRim)" stroke-width="1.6"/>
<circle r="1" transform="matrix(0.256 -22.105 18.534 -4.637 1133.61 454.00)" vector-effect="non-scaling-stroke" fill="none" stroke="url(#gRimD)" stroke-width="0.8"/>
<g clip-path="url(#cB1)"><circle r="1" transform="matrix(0.300 -25.872 21.693 -5.427 1115.61 447.00)" vector-effect="non-scaling-stroke" fill="#ffffff" stroke="#34332a" stroke-width="1.2"/></g>
<circle r="1" transform="matrix(0.300 -25.872 21.693 -5.427 1193.23 616.18)" vector-effect="non-scaling-stroke" fill="url(#gHole)" stroke="#34332a" stroke-width="1"/>
<circle r="1" transform="matrix(0.280 -24.114 20.218 -5.059 1193.23 616.18)" vector-effect="non-scaling-stroke" fill="none" stroke="url(#gRim)" stroke-width="1.6"/>
<circle r="1" transform="matrix(0.256 -22.105 18.534 -4.637 1193.23 616.18)" vector-effect="non-scaling-stroke" fill="none" stroke="url(#gRimD)" stroke-width="0.8"/>
<g clip-path="url(#cB2)"><circle r="1" transform="matrix(0.300 -25.872 21.693 -5.427 1175.23 609.18)" vector-effect="non-scaling-stroke" fill="#ffffff" stroke="#34332a" stroke-width="1.2"/></g>
<circle r="1" transform="matrix(0.300 -25.872 21.693 -5.427 1129.49 809.23)" vector-effect="non-scaling-stroke" fill="url(#gHole)" stroke="#34332a" stroke-width="1"/>
<circle r="1" transform="matrix(0.280 -24.114 20.218 -5.059 1129.49 809.23)" vector-effect="non-scaling-stroke" fill="none" stroke="url(#gRim)" stroke-width="1.6"/>
<circle r="1" transform="matrix(0.256 -22.105 18.534 -4.637 1129.49 809.23)" vector-effect="non-scaling-stroke" fill="none" stroke="url(#gRimD)" stroke-width="0.8"/>
<g clip-path="url(#cB3)"><circle r="1" transform="matrix(0.300 -25.872 21.693 -5.427 1111.49 802.23)" vector-effect="non-scaling-stroke" fill="#ffffff" stroke="#34332a" stroke-width="1.2"/></g>
<circle r="1" transform="matrix(0.300 -25.872 21.693 -5.427 979.71 920.06)" vector-effect="non-scaling-stroke" fill="url(#gHole)" stroke="#34332a" stroke-width="1"/>
<circle r="1" transform="matrix(0.280 -24.114 20.218 -5.059 979.71 920.06)" vector-effect="non-scaling-stroke" fill="none" stroke="url(#gRim)" stroke-width="1.6"/>
<circle r="1" transform="matrix(0.256 -22.105 18.534 -4.637 979.71 920.06)" vector-effect="non-scaling-stroke" fill="none" stroke="url(#gRimD)" stroke-width="0.8"/>
<g clip-path="url(#cB4)"><circle r="1" transform="matrix(0.300 -25.872 21.693 -5.427 961.71 913.06)" vector-effect="non-scaling-stroke" fill="#ffffff" stroke="#34332a" stroke-width="1.2"/></g>
<circle r="1" transform="matrix(0.300 -25.872 21.693 -5.427 831.64 883.75)" vector-effect="non-scaling-stroke" fill="url(#gHole)" stroke="#34332a" stroke-width="1"/>
<circle r="1" transform="matrix(0.280 -24.114 20.218 -5.059 831.64 883.75)" vector-effect="non-scaling-stroke" fill="none" stroke="url(#gRim)" stroke-width="1.6"/>
<circle r="1" transform="matrix(0.256 -22.105 18.534 -4.637 831.64 883.75)" vector-effect="non-scaling-stroke" fill="none" stroke="url(#gRimD)" stroke-width="0.8"/>
<g clip-path="url(#cB5)"><circle r="1" transform="matrix(0.300 -25.872 21.693 -5.427 813.64 876.75)" vector-effect="non-scaling-stroke" fill="#ffffff" stroke="#34332a" stroke-width="1.2"/></g>
<circle r="1" transform="matrix(0.300 -25.872 21.693 -5.427 772.02 721.57)" vector-effect="non-scaling-stroke" fill="url(#gHole)" stroke="#34332a" stroke-width="1"/>
<circle r="1" transform="matrix(0.280 -24.114 20.218 -5.059 772.02 721.57)" vector-effect="non-scaling-stroke" fill="none" stroke="url(#gRim)" stroke-width="1.6"/>
<circle r="1" transform="matrix(0.256 -22.105 18.534 -4.637 772.02 721.57)" vector-effect="non-scaling-stroke" fill="none" stroke="url(#gRimD)" stroke-width="0.8"/>
<g clip-path="url(#cB6)"><circle r="1" transform="matrix(0.300 -25.872 21.693 -5.427 754.02 714.57)" vector-effect="non-scaling-stroke" fill="#ffffff" stroke="#34332a" stroke-width="1.2"/></g>
<circle r="1" transform="matrix(0.300 -25.872 21.693 -5.427 835.76 528.52)" vector-effect="non-scaling-stroke" fill="url(#gHole)" stroke="#34332a" stroke-width="1"/>
<circle r="1" transform="matrix(0.280 -24.114 20.218 -5.059 835.76 528.52)" vector-effect="non-scaling-stroke" fill="none" stroke="url(#gRim)" stroke-width="1.6"/>
<circle r="1" transform="matrix(0.256 -22.105 18.534 -4.637 835.76 528.52)" vector-effect="non-scaling-stroke" fill="none" stroke="url(#gRimD)" stroke-width="0.8"/>
<g clip-path="url(#cB7)"><circle r="1" transform="matrix(0.300 -25.872 21.693 -5.427 817.76 521.52)" vector-effect="non-scaling-stroke" fill="#ffffff" stroke="#34332a" stroke-width="1.2"/></g>
<circle r="1" transform="matrix(1.049 -90.428 75.819 -18.970 1460.39 552.09)" vector-effect="non-scaling-stroke" fill="url(#gShade)" stroke="none"/>
<path d="M1400.7,564.3 L1400.7,562.0 L1400.9,559.8 L1401.1,557.5 L1401.3,555.2 L1401.6,553.0 L1402.0,550.7 L1402.5,548.4 L1403.0,546.1 L1403.5,543.8 L1404.2,541.6 L1404.9,539.3 L1405.6,537.1 L1406.4,534.8 L1407.3,532.6 L1408.3,530.5 L1409.2,528.3 L1410.3,526.2 L1411.4,524.1 L1412.5,522.0 L1413.7,520.0 L1415.0,518.0 L1416.3,516.0 L1417.6,514.1 L1419.0,512.2 L1420.4,510.4 L1421.9,508.6 L1423.4,506.9 L1425.0,505.3 L1426.6,503.6 L1428.2,502.1 L1429.8,500.6 L1431.5,499.2 L1433.2,497.8 L1435.0,496.5 L1436.7,495.2 L1438.5,494.1 L1440.3,493.0 L1442.1,491.9 L1443.9,491.0 L1445.8,490.1 L1447.7,489.3 L1449.5,488.5 L1451.4,487.9 L1453.3,487.3 L1455.1,486.8 L1457.0,486.4 L1458.9,486.0 L1460.7,485.7 L1462.6,485.5 L1464.4,485.4 L1466.3,485.4 L1468.1,485.4 L1469.9,485.6 L1471.7,485.8 L1473.5,486.1 L1485.5,488.6 L1487.2,488.9 L1488.9,489.4 L1490.6,489.9 L1492.3,490.5 L1493.9,491.2 L1495.5,491.9 L1497.0,492.7 L1498.6,493.6 L1500.0,494.6 L1501.5,495.6 L1502.9,496.8 L1504.2,497.9 L1505.5,499.2 L1506.8,500.5 L1508.0,501.9 L1509.2,503.3 L1510.3,504.8 L1511.3,506.4 L1512.3,508.0 L1513.3,509.7 L1514.2,511.4 L1515.0,513.2 L1515.8,515.0 L1516.5,516.9 L1517.1,518.8 L1517.7,520.8 L1518.2,522.8 L1518.7,524.8 L1519.1,526.9 L1519.4,529.0 L1519.7,531.1 L1519.9,533.3 L1520.0,535.5 L1520.1,537.7 L1520.1,539.9 L1520.0,542.1 L1519.9,544.4 L1519.7,546.7 L1519.5,549.0 L1519.1,551.2 L1518.8,553.5 L1518.3,555.8 L1517.8,558.1 L1517.2,560.4 L1516.6,562.6 L1515.9,564.9 L1515.1,567.1 L1514.3,569.3 L1513.5,571.5 L1512.5,573.7 L1511.5,575.9 L1510.5,578.0 L1509.4,580.1 L1508.3,582.2 L1507.1,584.2 L1505.8,586.2 L1504.5,588.2 L1503.2,590.1 L1501.8,592.0 L1500.3,593.8 L1498.9,595.5 L1497.4,597.3 L1495.8,598.9 L1494.2,600.5 L1492.6,602.1 L1490.9,603.6 L1489.3,605.0 L1487.6,606.4 L1485.8,607.7 L1484.1,608.9 L1482.3,610.1 L1480.5,611.2 L1478.7,612.2 L1476.8,613.2 L1475.0,614.1 L1473.1,614.9 L1471.3,615.6 L1469.4,616.3 L1467.5,616.9 L1465.6,617.4 L1463.8,617.8 L1461.9,618.2 L1460.0,618.4 L1458.2,618.6 L1456.3,618.8 L1454.5,618.8 L1452.7,618.7 L1450.9,618.6 L1449.1,618.4 L1447.3,618.1 L1435.3,615.6 L1433.6,615.3 L1431.9,614.8 L1430.2,614.3 L1428.5,613.7 L1426.9,613.0 L1425.3,612.3 L1423.7,611.5 L1422.2,610.6 L1420.7,609.6 L1419.3,608.5 L1417.9,607.4 L1416.5,606.3 L1415.2,605.0 L1414.0,603.7 L1412.8,602.3 L1411.6,600.9 L1410.5,599.4 L1409.4,597.8 L1408.5,596.2 L1407.5,594.5 L1406.6,592.8 L1405.8,591.0 L1405.0,589.2 L1404.3,587.3 L1403.7,585.4 L1403.1,583.4 L1402.6,581.4 L1402.1,579.4 L1401.7,577.3 L1401.4,575.2 L1401.1,573.1 L1400.9,570.9 L1400.8,568.7 L1400.7,566.5Z" fill="url(#gBossWall)" stroke="#34332a" stroke-width="1"/>
<circle r="1" transform="matrix(0.743 -64.053 53.705 -13.437 1466.39 553.34)" vector-effect="non-scaling-stroke" fill="#838068" stroke="#34332a" stroke-width="1"/>
<circle r="1" transform="matrix(0.708 -61.039 51.178 -12.804 1467.19 553.94)" vector-effect="non-scaling-stroke" fill="none" stroke="url(#gRimUL)" stroke-width="1.2"/>
<circle r="1" transform="matrix(0.358 -30.896 25.905 -6.481 1467.89 554.84)" vector-effect="non-scaling-stroke" fill="url(#gBossHole)" stroke="#34332a" stroke-width="1"/>
<circle r="1" transform="matrix(0.335 -28.887 24.220 -6.060 1467.89 554.84)" vector-effect="non-scaling-stroke" fill="none" stroke="url(#gRim)" stroke-width="1.8"/>
<circle r="1" transform="matrix(0.306 -26.375 22.114 -5.533 1467.89 554.84)" vector-effect="non-scaling-stroke" fill="none" stroke="url(#gRimD)" stroke-width="0.8"/>
</svg>
<svg class="a" style="left:1690px;top:845px" width="150" height="130">
 <g transform="translate(-1690,-845)">
 <g fill="none" stroke="#b8b8b8" stroke-width="1">
  <path d="M1743.5,916.4 L1773.3,908.6 L1802.4,918.4 L1769.4,927.4 Z M1743.5,916.4 V955.9 L1769.4,967.6 L1802.4,957.9 V918.4 M1769.4,927.4 V967.6"/>
 </g>
 <path d="M1771.2,917.5 V888 h-2.6 L1773.4,869 L1778.3,888 h-2.6 V917.5 Z" fill="#1a30c8"/>
 <path d="M1757.5,939.5 L1730,947 l1,-3.5 L1716.5,952.5 L1733,954 l-1,-3 L1758.5,944 Z" fill="#c42040"/>
 <path d="M1785,941.5 L1806,951 l1.5,-3.5 L1817.5,956.5 L1802,957 l1.5,-3 L1783.5,945.5 Z" fill="#2a9a3a"/>
 </g>
</svg>
<div class="t" style="left:1768px;top:852px;font-size:11px;color:#3a3aa0">Z</div>
<div class="t" style="left:1703px;top:947px;font-size:11px;color:#a03050">X</div>
<div class="t" style="left:1819px;top:952px;font-size:11px;color:#3a9a3a">Y</div>

<!-- right strip -->
<div class="a" style="left:1879px;top:179px;width:36px;height:871px;background:#fff"></div><div class="a" style="left:1879px;top:205px;width:1px;height:845px;background:#d0d0d0"></div>
<svg class="a" style="left:1878px;top:176px" width="40" height="310">
 <!-- eye slash -->
 <path d="M7.5,27.5 q11,-13 22,0 q-11,13 -22,0 z" fill="none" stroke="#333" stroke-width="1.2"/>
 <circle cx="18.5" cy="27.5" r="4.2" fill="none" stroke="#333" stroke-width="1.2"/>
 <path d="M8.5,38 l20,-21" stroke="#333" stroke-width="1.1"/>
 <!-- surface -->
 <rect x="9.5" y="51" width="18" height="19.5" fill="none" stroke="#8a8a8a" stroke-width="0.8"/><defs><linearGradient id="gSurf" x1="0" y1="0" x2="1" y2="1"><stop offset="0" stop-color="#f0f0f0"/><stop offset="1" stop-color="#7a7a7a"/></linearGradient></defs><path d="M11.5,69 q1,-10 7,-14.5 l8,-2 q-0.5,10 -5.5,16.5 z" fill="url(#gSurf)" stroke="#444" stroke-width="0.8"/><path d="M9,54.5 q9,-6 20,-3" fill="none" stroke="#30b8c8" stroke-width="1.1"/><g fill="#fff" stroke="#888" stroke-width="0.7"><rect x="8" y="49.5" width="3" height="3"/><rect x="26" y="49.5" width="3" height="3"/><rect x="8" y="69" width="3" height="3"/><rect x="26" y="69" width="3" height="3"/></g>
 <!-- star with hand -->
 <path d="M22,89 l2.5,5 l5.5,0.7 l-4,3.8 l1,5.5 l-5,-2.6 l-5,2.6 l1,-5.5 l-4,-3.8 l5.5,-0.7 z" fill="#f0e050" stroke="#c0a020" stroke-width="0.7"/>
 <path d="M16,88 l6,-5 l6,-1 l1,3 l-5,4 z" fill="#f0c8a0" stroke="#555" stroke-width="0.7"/><rect x="25" y="80" width="5" height="4" fill="#4040c0" transform="rotate(-30 27 82)"/>
 <path d="M8,95 h7 M9,98 h6 M10,101 h5" stroke="#6aa0d0" stroke-width="1"/>
 <!-- tree search -->
 <rect x="10.5" y="112.5" width="6" height="5" fill="#fff" stroke="#333" stroke-width="1"/>
 <path d="M13.5,117.5 v18 M13.5,124 h4 M13.5,133 h4" stroke="#333" stroke-width="1" fill="none"/>
 <rect x="17.5" y="121.5" width="5" height="5" fill="#fff" stroke="#e08020" stroke-width="1"/>
 <circle cx="26" cy="127.5" r="5" fill="#fff" stroke="#333" stroke-width="1.1"/><path d="M22.5,131 l-4,4" stroke="#333" stroke-width="1.6"/>
 <!-- help -->
 <circle cx="19" cy="154.5" r="11" fill="none" stroke="#333" stroke-width="1.1"/>
 <path d="M15.5,151 a3.5,3.5 0 1 1 5,3.2 q-1.5,0.8 -1.5,2.5 v1.3" fill="none" stroke="#333" stroke-width="1.1"/><circle cx="19" cy="161" r="0.9" fill="#333"/>
 <!-- orange cylinder P= -->
 <path d="M9,186 l8,-4 h12 v6 l-8,4 h-12 z" fill="#ddd" stroke="#555" stroke-width="0.8"/>
 <path d="M14,178 v7 a5,2 0 0 0 10,0 v-7 z" fill="#e07a20"/><ellipse cx="19" cy="178" rx="5" ry="2" fill="#f4a040"/>
 <rect x="17.5" y="189.5" width="13" height="9" fill="#fff" stroke="#222" stroke-width="1.1"/>
 <text x="19" y="197" font-family="Liberation Sans" font-weight="700" font-size="7" fill="#222">P=</text>
 <!-- cubes orange -->
<path d="M22,207 l6.0,3.4799999999999995 l-6.0,3.4799999999999995 l-6.0,-3.4799999999999995 z" fill="#fafafa" stroke="#aaa" stroke-width="0.7"/><path d="M16.0,210.48 l6.0,3.4799999999999995 v6.959999999999999 l-6.0,-3.4799999999999995 z" fill="#f0f0f0" stroke="#aaa" stroke-width="0.7"/><path d="M28.0,210.48 l-6.0,3.4799999999999995 v6.959999999999999 l6.0,-3.4799999999999995 z" fill="#e4e4e4" stroke="#aaa" stroke-width="0.7"/><path d="M17,216 l6.0,3.4799999999999995 l-6.0,3.4799999999999995 l-6.0,-3.4799999999999995 z" fill="#f4b060" stroke="#b06020" stroke-width="0.7"/><path d="M11.0,219.48 l6.0,3.4799999999999995 v6.959999999999999 l-6.0,-3.4799999999999995 z" fill="#f09030" stroke="#b06020" stroke-width="0.7"/><path d="M23.0,219.48 l-6.0,3.4799999999999995 v6.959999999999999 l6.0,-3.4799999999999995 z" fill="#d87020" stroke="#b06020" stroke-width="0.7"/>
<!-- star 2 -->
 <path d="M22,249 l2.5,5 l5.5,0.7 l-4,3.8 l1,5.5 l-5,-2.6 l-5,2.6 l1,-5.5 l-4,-3.8 l5.5,-0.7 z" fill="#f0e050" stroke="#c0a020" stroke-width="0.7"/>
 <path d="M16,248 l6,-5 l6,-1 l1,3 l-5,4 z" fill="#f0c8a0" stroke="#555" stroke-width="0.7"/><rect x="25" y="240" width="5" height="4" fill="#4040c0" transform="rotate(-30 27 242)"/>
 <path d="M8,255 h7 M9,258 h6 M10,261 h5" stroke="#6aa0d0" stroke-width="1"/>
 <!-- cubes magnifier -->
<path d="M19,272 l5.5,3.19 l-5.5,3.19 l-5.5,-3.19 z" fill="#fafafa" stroke="#aaa" stroke-width="0.7"/><path d="M13.5,275.19 l5.5,3.19 v6.38 l-5.5,-3.19 z" fill="#f0f0f0" stroke="#aaa" stroke-width="0.7"/><path d="M24.5,275.19 l-5.5,3.19 v6.38 l5.5,-3.19 z" fill="#e4e4e4" stroke="#aaa" stroke-width="0.7"/><path d="M16,280 l5.5,3.19 l-5.5,3.19 l-5.5,-3.19 z" fill="#f4b060" stroke="#b06020" stroke-width="0.7"/><path d="M10.5,283.19 l5.5,3.19 v6.38 l-5.5,-3.19 z" fill="#f09030" stroke="#b06020" stroke-width="0.7"/><path d="M21.5,283.19 l-5.5,3.19 v6.38 l5.5,-3.19 z" fill="#d87020" stroke="#b06020" stroke-width="0.7"/><circle cx="27" cy="289" r="4.5" fill="#fff" stroke="#333" stroke-width="1.1"/><path d="M24,292.5 l-4,4" stroke="#333" stroke-width="1.6"/>
 <path d="M6,305.5 h27" stroke="#d8d8e0" stroke-width="1"/>
</svg>
<svg class="a" style="left:1880px;top:1030px" width="20" height="20"><path d="M11.5,7 v6.5 l-3.5,-3.25 z" fill="#222"/></svg>

<!-- status bar -->
<div class="a" style="left:3px;top:1049px;width:1912px;height:22px;background:#fff;border-top:1px solid #c6c6c6"></div>
<div class="t" style="left:6px;top:1053px;font-size:11px;font-weight:700;color:#1e1e1e">Create a new FEM and Simulation</div>
<svg class="a" style="left:1765px;top:1048px" width="24" height="24"><path d="M12.5,4.5 a1.2,1.2 0 1 1 0.01,0 M7,17 q1.5,-2 1.5,-6 q0,-4.5 4,-5 q4,0.5 4,5 q0,4 1.5,6 z M5.5,17.5 h14 M11,18 q1.5,3 3,0" fill="none" stroke="#444" stroke-width="1"/></svg>
<div class="t" style="left:1790px;top:1053px;color:#222">1 <span style="color:#4a2448">Notification</span></div>

</body></html>
